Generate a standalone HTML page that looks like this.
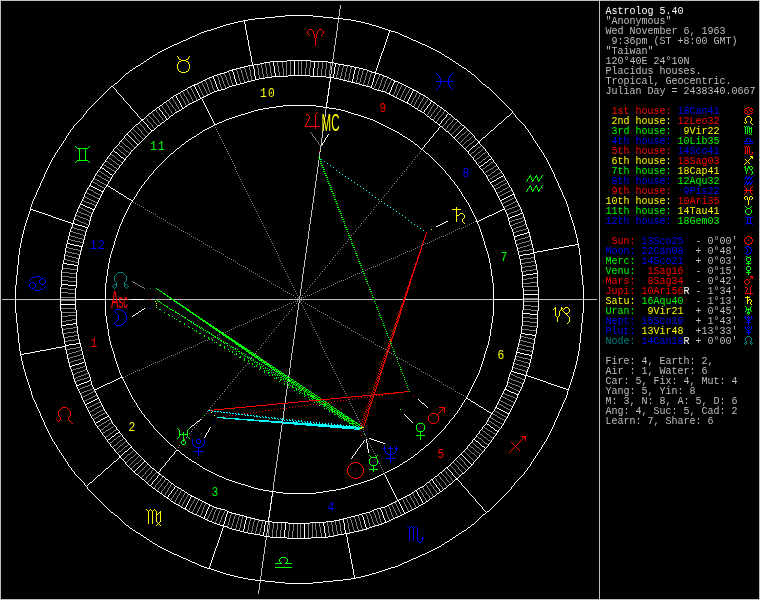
<!DOCTYPE html><html><head><meta charset="utf-8"><title>Astrolog 5.40</title><style>
html,body{margin:0;padding:0;background:#000;}
#w{position:relative;width:760px;height:600px;background:#000;overflow:hidden;font-family:"Liberation Mono",monospace;}
.l{position:absolute;left:605.5px;height:10px;font-size:10px;line-height:10px;white-space:pre;}
.hn{font-family:"Liberation Mono",monospace;font-size:13.3px;text-anchor:middle;letter-spacing:1.43px;}
.ob{font-family:"Liberation Sans",sans-serif;text-anchor:middle;}
</style></head><body><div id="w">
<div style="position:absolute;left:0;top:0;width:760px;height:600px;will-change:transform">
<svg width="760" height="600" viewBox="0 0 760 600" shape-rendering="crispEdges" style="position:absolute;left:0;top:0">
<g transform="translate(0,.5)" fill="none" stroke-width="1">
<path stroke="#bfbfbf" d="M0 0h760M0 1h1M599 1h1M759 1h1M0 2h1M599 2h1M759 2h1M0 3h1M599 3h1M759 3h1M0 4h1M599 4h1M759 4h1M0 5h1M340 5h1M599 5h1M759 5h1M0 6h1M340 6h1M599 6h1M759 6h1M0 7h1M340 7h1M599 7h1M759 7h1M0 8h1M340 8h1M599 8h1M759 8h1M0 9h1M339 9h1M599 9h1M759 9h1M0 10h1M339 10h1M599 10h1M759 10h1M0 11h1M339 11h1M599 11h1M759 11h1M0 12h1M339 12h1M599 12h1M759 12h1M0 13h1M339 13h1M599 13h1M759 13h1M0 14h1M339 14h1M599 14h1M759 14h1M0 15h1M339 15h1M599 15h1M759 15h1M0 16h1M338 16h1M599 16h1M759 16h1M0 17h1M338 17h1M599 17h1M759 17h1M0 18h1M599 18h1M759 18h1M0 19h1M338 19h1M599 19h1M759 19h1M0 20h1M338 20h1M599 20h1M759 20h1M0 21h1M338 21h1M599 21h1M759 21h1M0 22h1M338 22h1M599 22h1M759 22h1M0 23h1M337 23h1M599 23h1M759 23h1M0 24h1M337 24h1M599 24h1M759 24h1M0 25h1M337 25h1M599 25h1M759 25h1M0 26h1M337 26h1M599 26h1M759 26h1M0 27h1M337 27h1M599 27h1M759 27h1M0 28h1M337 28h1M599 28h1M759 28h1M0 29h1M337 29h1M599 29h1M759 29h1M0 30h1M337 30h1M599 30h1M759 30h1M0 31h1M336 31h1M599 31h1M759 31h1M0 32h1M336 32h1M599 32h1M759 32h1M0 33h1M336 33h1M599 33h1M759 33h1M0 34h1M336 34h1M599 34h1M759 34h1M0 35h1M336 35h1M599 35h1M759 35h1M0 36h1M336 36h1M599 36h1M759 36h1M0 37h1M336 37h1M599 37h1M759 37h1M0 38h1M335 38h1M599 38h1M759 38h1M0 39h1M335 39h1M599 39h1M759 39h1M0 40h1M335 40h1M599 40h1M759 40h1M0 41h1M335 41h1M599 41h1M759 41h1M0 42h1M335 42h1M599 42h1M759 42h1M0 43h1M335 43h1M599 43h1M759 43h1M0 44h1M335 44h1M599 44h1M759 44h1M0 45h1M334 45h1M599 45h1M759 45h1M0 46h1M334 46h1M599 46h1M759 46h1M0 47h1M334 47h1M599 47h1M759 47h1M0 48h1M334 48h1M599 48h1M759 48h1M0 49h1M334 49h1M599 49h1M759 49h1M0 50h1M334 50h1M599 50h1M759 50h1M0 51h1M334 51h1M599 51h1M759 51h1M0 52h1M333 52h1M599 52h1M759 52h1M0 53h1M333 53h1M599 53h1M759 53h1M0 54h1M333 54h1M599 54h1M759 54h1M0 55h1M333 55h1M599 55h1M759 55h1M0 56h1M333 56h1M599 56h1M759 56h1M0 57h1M333 57h1M599 57h1M759 57h1M0 58h1M333 58h1M599 58h1M759 58h1M0 59h1M332 59h1M599 59h1M759 59h1M0 60h1M332 60h1M599 60h1M759 60h1M0 61h1M332 61h1M599 61h1M759 61h1M0 62h1M599 62h1M759 62h1M0 63h1M332 63h1M599 63h1M759 63h1M0 64h1M332 64h1M599 64h1M759 64h1M0 65h1M332 65h1M599 65h1M759 65h1M0 66h1M331 66h1M599 66h1M759 66h1M0 67h1M331 67h1M599 67h1M759 67h1M0 68h1M331 68h1M599 68h1M759 68h1M0 69h1M331 69h1M599 69h1M759 69h1M0 70h1M331 70h1M599 70h1M759 70h1M0 71h1M331 71h1M599 71h1M759 71h1M0 72h1M331 72h1M599 72h1M759 72h1M0 73h1M331 73h1M599 73h1M759 73h1M0 74h1M330 74h1M599 74h1M759 74h1M0 75h1M330 75h1M599 75h1M759 75h1M0 76h1M330 76h1M599 76h1M759 76h1M0 77h1M599 77h1M759 77h1M0 78h1M599 78h1M759 78h1M0 79h1M599 79h1M759 79h1M0 80h1M599 80h1M759 80h1M0 81h1M329 81h1M599 81h1M759 81h1M0 82h1M599 82h1M759 82h1M0 83h1M599 83h1M759 83h1M0 84h1M599 84h1M759 84h1M0 85h1M599 85h1M759 85h1M0 86h1M599 86h1M759 86h1M0 87h1M599 87h1M759 87h1M0 88h1M328 88h1M599 88h1M759 88h1M0 89h1M599 89h1M759 89h1M0 90h1M599 90h1M759 90h1M0 91h1M599 91h1M759 91h1M0 92h1M599 92h1M759 92h1M0 93h1M599 93h1M759 93h1M0 94h1M599 94h1M759 94h1M0 95h1M327 95h1M599 95h1M759 95h1M0 96h1M599 96h1M759 96h1M0 97h1M599 97h1M759 97h1M0 98h1M599 98h1M759 98h1M0 99h1M599 99h1M759 99h1M0 100h1M599 100h1M759 100h1M0 101h1M599 101h1M759 101h1M0 102h1M326 102h1M599 102h1M759 102h1M0 103h1M599 103h1M759 103h1M0 104h1M599 104h1M759 104h1M0 105h1M599 105h1M759 105h1M0 106h1M599 106h1M759 106h1M0 107h1M599 107h1M759 107h1M0 108h1M326 108h1M599 108h1M759 108h1M0 109h1M325 109h1M599 109h1M759 109h1M0 110h1M325 110h1M599 110h1M759 110h1M0 111h1M325 111h1M599 111h1M759 111h1M0 112h1M325 112h1M599 112h1M759 112h1M0 113h1M325 113h1M599 113h1M759 113h1M0 114h1M325 114h1M599 114h1M759 114h1M0 115h1M325 115h1M599 115h1M759 115h1M0 116h1M325 116h1M599 116h1M759 116h1M0 117h1M324 117h1M599 117h1M759 117h1M0 118h1M324 118h1M599 118h1M759 118h1M0 119h1M324 119h1M599 119h1M759 119h1M0 120h1M324 120h1M599 120h1M759 120h1M0 121h1M324 121h1M599 121h1M759 121h1M0 122h1M324 122h1M599 122h1M759 122h1M0 123h1M324 123h1M599 123h1M759 123h1M0 124h1M323 124h1M599 124h1M759 124h1M0 125h1M323 125h1M599 125h1M759 125h1M0 126h1M323 126h1M599 126h1M759 126h1M0 127h1M323 127h1M599 127h1M759 127h1M0 128h1M323 128h1M599 128h1M759 128h1M0 129h1M323 129h1M599 129h1M759 129h1M0 130h1M323 130h1M599 130h1M759 130h1M0 131h1M322 131h1M599 131h1M759 131h1M0 132h1M322 132h1M599 132h1M759 132h1M0 133h1M322 133h1M599 133h1M759 133h1M0 134h1M322 134h1M599 134h1M759 134h1M0 135h1M322 135h1M599 135h1M759 135h1M0 136h1M322 136h1M599 136h1M759 136h1M0 137h1M322 137h1M599 137h1M759 137h1M0 138h1M321 138h1M599 138h1M759 138h1M0 139h1M321 139h1M599 139h1M759 139h1M0 140h1M321 140h1M599 140h1M759 140h1M0 141h1M321 141h1M599 141h1M759 141h1M0 142h1M321 142h1M599 142h1M759 142h1M0 143h1M321 143h1M599 143h1M759 143h1M0 144h1M321 144h1M599 144h1M759 144h1M0 145h1M599 145h1M759 145h1M0 146h1M320 146h1M599 146h1M759 146h1M0 147h1M320 147h1M599 147h1M759 147h1M0 148h1M320 148h1M599 148h1M759 148h1M0 149h1M320 149h1M599 149h1M759 149h1M0 150h1M320 150h1M599 150h1M759 150h1M0 151h1M599 151h1M759 151h1M0 152h1M319 152h1M599 152h1M759 152h1M0 153h1M319 153h1M599 153h1M759 153h1M0 154h1M319 154h1M599 154h1M759 154h1M0 155h1M319 155h1M599 155h1M759 155h1M0 156h1M319 156h1M599 156h1M759 156h1M0 157h1M599 157h1M759 157h1M0 158h1M319 158h1M599 158h1M759 158h1M0 159h1M599 159h1M759 159h1M0 160h1M318 160h1M599 160h1M759 160h1M0 161h1M318 161h1M599 161h1M759 161h1M0 162h1M318 162h1M599 162h1M759 162h1M0 163h1M318 163h1M599 163h1M759 163h1M0 164h1M318 164h1M599 164h1M759 164h1M0 165h1M318 165h1M599 165h1M759 165h1M0 166h1M318 166h1M599 166h1M759 166h1M0 167h1M317 167h1M599 167h1M759 167h1M0 168h1M317 168h1M599 168h1M759 168h1M0 169h1M317 169h1M599 169h1M759 169h1M0 170h1M317 170h1M599 170h1M759 170h1M0 171h1M317 171h1M599 171h1M759 171h1M0 172h1M317 172h1M599 172h1M759 172h1M0 173h1M317 173h1M599 173h1M759 173h1M0 174h1M316 174h1M599 174h1M759 174h1M0 175h1M316 175h1M599 175h1M759 175h1M0 176h1M316 176h1M599 176h1M759 176h1M0 177h1M316 177h1M599 177h1M759 177h1M0 178h1M316 178h1M599 178h1M759 178h1M0 179h1M316 179h1M599 179h1M759 179h1M0 180h1M316 180h1M599 180h1M759 180h1M0 181h1M315 181h1M599 181h1M759 181h1M0 182h1M315 182h1M599 182h1M759 182h1M0 183h1M315 183h1M599 183h1M759 183h1M0 184h1M315 184h1M599 184h1M759 184h1M0 185h1M315 185h1M599 185h1M759 185h1M0 186h1M315 186h1M599 186h1M759 186h1M0 187h1M315 187h1M599 187h1M759 187h1M0 188h1M314 188h1M599 188h1M759 188h1M0 189h1M314 189h1M599 189h1M759 189h1M0 190h1M314 190h1M599 190h1M759 190h1M0 191h1M314 191h1M599 191h1M759 191h1M0 192h1M314 192h1M599 192h1M759 192h1M0 193h1M314 193h1M599 193h1M759 193h1M0 194h1M314 194h1M599 194h1M759 194h1M0 195h1M314 195h1M599 195h1M759 195h1M0 196h1M313 196h1M599 196h1M759 196h1M0 197h1M313 197h1M599 197h1M759 197h1M0 198h1M313 198h1M599 198h1M759 198h1M0 199h1M313 199h1M599 199h1M759 199h1M0 200h1M313 200h1M599 200h1M759 200h1M0 201h1M313 201h1M599 201h1M759 201h1M0 202h1M313 202h1M599 202h1M759 202h1M0 203h1M312 203h1M599 203h1M759 203h1M0 204h1M312 204h1M599 204h1M759 204h1M0 205h1M312 205h1M599 205h1M759 205h1M0 206h1M312 206h1M599 206h1M759 206h1M0 207h1M312 207h1M599 207h1M759 207h1M0 208h1M312 208h1M599 208h1M759 208h1M0 209h1M312 209h1M599 209h1M759 209h1M0 210h1M311 210h1M599 210h1M759 210h1M0 211h1M311 211h1M599 211h1M759 211h1M0 212h1M311 212h1M599 212h1M759 212h1M0 213h1M311 213h1M599 213h1M759 213h1M0 214h1M311 214h1M599 214h1M759 214h1M0 215h1M311 215h1M599 215h1M759 215h1M0 216h1M311 216h1M599 216h1M759 216h1M0 217h1M310 217h1M599 217h1M759 217h1M0 218h1M310 218h1M599 218h1M759 218h1M0 219h1M310 219h1M599 219h1M759 219h1M0 220h1M310 220h1M599 220h1M759 220h1M0 221h1M310 221h1M599 221h1M759 221h1M0 222h1M310 222h1M599 222h1M759 222h1M0 223h1M310 223h1M599 223h1M759 223h1M0 224h1M309 224h1M599 224h1M759 224h1M0 225h1M309 225h1M599 225h1M759 225h1M0 226h1M309 226h1M599 226h1M759 226h1M0 227h1M309 227h1M599 227h1M759 227h1M0 228h1M309 228h1M599 228h1M759 228h1M0 229h1M309 229h1M599 229h1M759 229h1M0 230h1M309 230h1M599 230h1M759 230h1M0 231h1M308 231h1M599 231h1M759 231h1M0 232h1M308 232h1M599 232h1M759 232h1M0 233h1M308 233h1M599 233h1M759 233h1M0 234h1M308 234h1M599 234h1M759 234h1M0 235h1M308 235h1M599 235h1M759 235h1M0 236h1M308 236h1M599 236h1M759 236h1M0 237h1M308 237h1M599 237h1M759 237h1M0 238h1M308 238h1M599 238h1M759 238h1M0 239h1M307 239h1M599 239h1M759 239h1M0 240h1M307 240h1M599 240h1M759 240h1M0 241h1M307 241h1M599 241h1M759 241h1M0 242h1M307 242h1M599 242h1M759 242h1M0 243h1M307 243h1M599 243h1M759 243h1M0 244h1M307 244h1M599 244h1M759 244h1M0 245h1M307 245h1M599 245h1M759 245h1M0 246h1M306 246h1M599 246h1M759 246h1M0 247h1M306 247h1M599 247h1M759 247h1M0 248h1M306 248h1M599 248h1M759 248h1M0 249h1M306 249h1M599 249h1M759 249h1M0 250h1M306 250h1M599 250h1M759 250h1M0 251h1M306 251h1M599 251h1M759 251h1M0 252h1M306 252h1M599 252h1M759 252h1M0 253h1M305 253h1M599 253h1M759 253h1M0 254h1M305 254h1M599 254h1M759 254h1M0 255h1M305 255h1M599 255h1M759 255h1M0 256h1M305 256h1M599 256h1M759 256h1M0 257h1M305 257h1M599 257h1M759 257h1M0 258h1M305 258h1M599 258h1M759 258h1M0 259h1M305 259h1M599 259h1M759 259h1M0 260h1M304 260h1M599 260h1M759 260h1M0 261h1M304 261h1M599 261h1M759 261h1M0 262h1M304 262h1M599 262h1M759 262h1M0 263h1M304 263h1M599 263h1M759 263h1M0 264h1M304 264h1M599 264h1M759 264h1M0 265h1M304 265h1M599 265h1M759 265h1M0 266h1M304 266h1M599 266h1M759 266h1M0 267h1M303 267h1M599 267h1M759 267h1M0 268h1M303 268h1M599 268h1M759 268h1M0 269h1M303 269h1M599 269h1M759 269h1M0 270h1M303 270h1M599 270h1M759 270h1M0 271h1M303 271h1M599 271h1M759 271h1M0 272h1M303 272h1M599 272h1M759 272h1M0 273h1M303 273h1M599 273h1M759 273h1M0 274h1M302 274h1M599 274h1M759 274h1M0 275h1M302 275h1M599 275h1M759 275h1M0 276h1M302 276h1M599 276h1M759 276h1M0 277h1M302 277h1M599 277h1M759 277h1M0 278h1M302 278h1M599 278h1M759 278h1M0 279h1M302 279h1M599 279h1M759 279h1M0 280h1M302 280h1M599 280h1M759 280h1M0 281h1M302 281h1M599 281h1M759 281h1M0 282h1M301 282h1M599 282h1M759 282h1M0 283h1M301 283h1M599 283h1M759 283h1M0 284h1M301 284h1M599 284h1M759 284h1M0 285h1M301 285h1M599 285h1M759 285h1M0 286h1M301 286h1M599 286h1M759 286h1M0 287h1M301 287h1M599 287h1M759 287h1M0 288h1M301 288h1M599 288h1M759 288h1M0 289h1M300 289h1M599 289h1M759 289h1M0 290h1M300 290h1M599 290h1M759 290h1M0 291h1M300 291h1M599 291h1M759 291h1M0 292h1M300 292h1M599 292h1M759 292h1M0 293h1M300 293h1M599 293h1M759 293h1M0 294h1M300 294h1M599 294h1M759 294h1M0 295h1M300 295h1M599 295h1M759 295h1M0 296h1M299 296h1M599 296h1M759 296h1M0 297h1M299 297h1M599 297h1M759 297h1M0 298h1M299 298h1M599 298h1M759 298h1M0 299h1M2 299h13M16 299h44M61 299h14M106 299h25M144 299h5M150 299h5M156 299h16M174 299h125M300 299h73M375 299h28M405 299h88M524 299h14M539 299h44M584 299h13M599 299h1M759 299h1M0 300h1M299 300h1M599 300h1M759 300h1M0 301h1M299 301h1M599 301h1M759 301h1M0 302h1M299 302h1M599 302h1M759 302h1M0 303h1M298 303h1M599 303h1M759 303h1M0 304h1M298 304h1M599 304h1M759 304h1M0 305h1M298 305h1M599 305h1M759 305h1M0 306h1M298 306h1M599 306h1M759 306h1M0 307h1M298 307h1M599 307h1M759 307h1M0 308h1M298 308h1M599 308h1M759 308h1M0 309h1M298 309h1M599 309h1M759 309h1M0 310h1M297 310h1M599 310h1M759 310h1M0 311h1M297 311h1M599 311h1M759 311h1M0 312h1M297 312h1M599 312h1M759 312h1M0 313h1M297 313h1M599 313h1M759 313h1M0 314h1M297 314h1M599 314h1M759 314h1M0 315h1M297 315h1M599 315h1M759 315h1M0 316h1M297 316h1M599 316h1M759 316h1M0 317h1M296 317h1M599 317h1M759 317h1M0 318h1M296 318h1M599 318h1M759 318h1M0 319h1M296 319h1M599 319h1M759 319h1M0 320h1M296 320h1M599 320h1M759 320h1M0 321h1M296 321h1M599 321h1M759 321h1M0 322h1M296 322h1M599 322h1M759 322h1M0 323h1M296 323h1M599 323h1M759 323h1M0 324h1M296 324h1M599 324h1M759 324h1M0 325h1M295 325h1M599 325h1M759 325h1M0 326h1M295 326h1M599 326h1M759 326h1M0 327h1M295 327h1M599 327h1M759 327h1M0 328h1M295 328h1M599 328h1M759 328h1M0 329h1M295 329h1M599 329h1M759 329h1M0 330h1M295 330h1M599 330h1M759 330h1M0 331h1M295 331h1M599 331h1M759 331h1M0 332h1M294 332h1M599 332h1M759 332h1M0 333h1M294 333h1M599 333h1M759 333h1M0 334h1M294 334h1M599 334h1M759 334h1M0 335h1M294 335h1M599 335h1M759 335h1M0 336h1M294 336h1M599 336h1M759 336h1M0 337h1M294 337h1M599 337h1M759 337h1M0 338h1M294 338h1M599 338h1M759 338h1M0 339h1M293 339h1M599 339h1M759 339h1M0 340h1M293 340h1M599 340h1M759 340h1M0 341h1M293 341h1M599 341h1M759 341h1M0 342h1M293 342h1M599 342h1M759 342h1M0 343h1M293 343h1M599 343h1M759 343h1M0 344h1M293 344h1M599 344h1M759 344h1M0 345h1M293 345h1M599 345h1M759 345h1M0 346h1M292 346h1M599 346h1M759 346h1M0 347h1M292 347h1M599 347h1M759 347h1M0 348h1M292 348h1M599 348h1M759 348h1M0 349h1M292 349h1M599 349h1M759 349h1M0 350h1M292 350h1M599 350h1M759 350h1M0 351h1M292 351h1M599 351h1M759 351h1M0 352h1M292 352h1M599 352h1M759 352h1M0 353h1M291 353h1M599 353h1M759 353h1M0 354h1M291 354h1M599 354h1M759 354h1M0 355h1M291 355h1M599 355h1M759 355h1M0 356h1M291 356h1M599 356h1M759 356h1M0 357h1M291 357h1M599 357h1M759 357h1M0 358h1M291 358h1M599 358h1M759 358h1M0 359h1M291 359h1M599 359h1M759 359h1M0 360h1M290 360h1M599 360h1M759 360h1M0 361h1M290 361h1M599 361h1M759 361h1M0 362h1M290 362h1M599 362h1M759 362h1M0 363h1M290 363h1M599 363h1M759 363h1M0 364h1M290 364h1M599 364h1M759 364h1M0 365h1M290 365h1M599 365h1M759 365h1M0 366h1M290 366h1M599 366h1M759 366h1M0 367h1M290 367h1M599 367h1M759 367h1M0 368h1M289 368h1M599 368h1M759 368h1M0 369h1M289 369h1M599 369h1M759 369h1M0 370h1M289 370h1M599 370h1M759 370h1M0 371h1M289 371h1M599 371h1M759 371h1M0 372h1M289 372h1M599 372h1M759 372h1M0 373h1M289 373h1M599 373h1M759 373h1M0 374h1M289 374h1M599 374h1M759 374h1M0 375h1M288 375h1M599 375h1M759 375h1M0 376h1M288 376h1M599 376h1M759 376h1M0 377h1M599 377h1M759 377h1M0 378h1M599 378h1M759 378h1M0 379h1M288 379h1M599 379h1M759 379h1M0 380h1M599 380h1M759 380h1M0 381h1M288 381h1M599 381h1M759 381h1M0 382h1M287 382h1M599 382h1M759 382h1M0 383h1M599 383h1M759 383h1M0 384h1M287 384h1M599 384h1M759 384h1M0 385h1M287 385h1M599 385h1M759 385h1M0 386h1M287 386h1M599 386h1M759 386h1M0 387h1M287 387h1M599 387h1M759 387h1M0 388h1M287 388h1M599 388h1M759 388h1M0 389h1M286 389h1M599 389h1M759 389h1M0 390h1M286 390h1M599 390h1M759 390h1M0 391h1M286 391h1M599 391h1M759 391h1M0 392h1M286 392h1M599 392h1M759 392h1M0 393h1M286 393h1M599 393h1M759 393h1M0 394h1M286 394h1M599 394h1M759 394h1M0 395h1M286 395h1M599 395h1M759 395h1M0 396h1M285 396h1M599 396h1M759 396h1M0 397h1M285 397h1M599 397h1M759 397h1M0 398h1M285 398h1M599 398h1M759 398h1M0 399h1M285 399h1M599 399h1M759 399h1M0 400h1M285 400h1M599 400h1M759 400h1M0 401h1M285 401h1M599 401h1M759 401h1M0 402h1M285 402h1M599 402h1M759 402h1M0 403h1M599 403h1M759 403h1M0 404h1M284 404h1M599 404h1M759 404h1M0 405h1M284 405h1M599 405h1M759 405h1M0 406h1M284 406h1M599 406h1M759 406h1M0 407h1M284 407h1M599 407h1M759 407h1M0 408h1M284 408h1M599 408h1M759 408h1M0 409h1M284 409h1M599 409h1M759 409h1M0 410h1M284 410h1M599 410h1M759 410h1M0 411h1M283 411h1M599 411h1M759 411h1M0 412h1M283 412h1M599 412h1M759 412h1M0 413h1M283 413h1M599 413h1M759 413h1M0 414h1M283 414h1M599 414h1M759 414h1M0 415h1M283 415h1M599 415h1M759 415h1M0 416h1M283 416h1M599 416h1M759 416h1M0 417h1M283 417h1M599 417h1M759 417h1M0 418h1M282 418h1M599 418h1M759 418h1M0 419h1M282 419h1M599 419h1M759 419h1M0 420h1M282 420h1M599 420h1M759 420h1M0 421h1M599 421h1M759 421h1M0 422h1M599 422h1M759 422h1M0 423h1M282 423h1M599 423h1M759 423h1M0 424h1M282 424h1M599 424h1M759 424h1M0 425h1M281 425h1M599 425h1M759 425h1M0 426h1M281 426h1M599 426h1M759 426h1M0 427h1M281 427h1M599 427h1M759 427h1M0 428h1M281 428h1M599 428h1M759 428h1M0 429h1M281 429h1M599 429h1M759 429h1M0 430h1M281 430h1M599 430h1M759 430h1M0 431h1M281 431h1M599 431h1M759 431h1M0 432h1M280 432h1M599 432h1M759 432h1M0 433h1M280 433h1M599 433h1M759 433h1M0 434h1M280 434h1M599 434h1M759 434h1M0 435h1M280 435h1M599 435h1M759 435h1M0 436h1M280 436h1M599 436h1M759 436h1M0 437h1M280 437h1M599 437h1M759 437h1M0 438h1M280 438h1M599 438h1M759 438h1M0 439h1M279 439h1M599 439h1M759 439h1M0 440h1M279 440h1M599 440h1M759 440h1M0 441h1M279 441h1M599 441h1M759 441h1M0 442h1M279 442h1M599 442h1M759 442h1M0 443h1M279 443h1M599 443h1M759 443h1M0 444h1M279 444h1M599 444h1M759 444h1M0 445h1M279 445h1M599 445h1M759 445h1M0 446h1M278 446h1M599 446h1M759 446h1M0 447h1M278 447h1M599 447h1M759 447h1M0 448h1M278 448h1M599 448h1M759 448h1M0 449h1M278 449h1M599 449h1M759 449h1M0 450h1M278 450h1M599 450h1M759 450h1M0 451h1M278 451h1M599 451h1M759 451h1M0 452h1M278 452h1M599 452h1M759 452h1M0 453h1M278 453h1M599 453h1M759 453h1M0 454h1M277 454h1M599 454h1M759 454h1M0 455h1M277 455h1M599 455h1M759 455h1M0 456h1M277 456h1M599 456h1M759 456h1M0 457h1M277 457h1M599 457h1M759 457h1M0 458h1M277 458h1M599 458h1M759 458h1M0 459h1M277 459h1M599 459h1M759 459h1M0 460h1M277 460h1M599 460h1M759 460h1M0 461h1M276 461h1M599 461h1M759 461h1M0 462h1M276 462h1M599 462h1M759 462h1M0 463h1M276 463h1M599 463h1M759 463h1M0 464h1M276 464h1M599 464h1M759 464h1M0 465h1M276 465h1M599 465h1M759 465h1M0 466h1M276 466h1M599 466h1M759 466h1M0 467h1M276 467h1M599 467h1M759 467h1M0 468h1M275 468h1M599 468h1M759 468h1M0 469h1M275 469h1M599 469h1M759 469h1M0 470h1M275 470h1M599 470h1M759 470h1M0 471h1M275 471h1M599 471h1M759 471h1M0 472h1M275 472h1M599 472h1M759 472h1M0 473h1M275 473h1M599 473h1M759 473h1M0 474h1M275 474h1M599 474h1M759 474h1M0 475h1M274 475h1M599 475h1M759 475h1M0 476h1M274 476h1M599 476h1M759 476h1M0 477h1M274 477h1M599 477h1M759 477h1M0 478h1M274 478h1M599 478h1M759 478h1M0 479h1M274 479h1M599 479h1M759 479h1M0 480h1M274 480h1M599 480h1M759 480h1M0 481h1M274 481h1M599 481h1M759 481h1M0 482h1M273 482h1M599 482h1M759 482h1M0 483h1M273 483h1M599 483h1M759 483h1M0 484h1M273 484h1M599 484h1M759 484h1M0 485h1M273 485h1M599 485h1M759 485h1M0 486h1M273 486h1M599 486h1M759 486h1M0 487h1M273 487h1M599 487h1M759 487h1M0 488h1M273 488h1M599 488h1M759 488h1M0 489h1M273 489h1M599 489h1M759 489h1M0 490h1M272 490h1M599 490h1M759 490h1M0 491h1M599 491h1M759 491h1M0 492h1M599 492h1M759 492h1M0 493h1M599 493h1M759 493h1M0 494h1M599 494h1M759 494h1M0 495h1M599 495h1M759 495h1M0 496h1M272 496h1M599 496h1M759 496h1M0 497h1M599 497h1M759 497h1M0 498h1M599 498h1M759 498h1M0 499h1M599 499h1M759 499h1M0 500h1M599 500h1M759 500h1M0 501h1M599 501h1M759 501h1M0 502h1M599 502h1M759 502h1M0 503h1M271 503h1M599 503h1M759 503h1M0 504h1M599 504h1M759 504h1M0 505h1M599 505h1M759 505h1M0 506h1M599 506h1M759 506h1M0 507h1M599 507h1M759 507h1M0 508h1M599 508h1M759 508h1M0 509h1M599 509h1M759 509h1M0 510h1M270 510h1M599 510h1M759 510h1M0 511h1M599 511h1M759 511h1M0 512h1M599 512h1M759 512h1M0 513h1M599 513h1M759 513h1M0 514h1M599 514h1M759 514h1M0 515h1M599 515h1M759 515h1M0 516h1M599 516h1M759 516h1M0 517h1M269 517h1M599 517h1M759 517h1M0 518h1M599 518h1M759 518h1M0 519h1M599 519h1M759 519h1M0 520h1M599 520h1M759 520h1M0 521h1M599 521h1M759 521h1M0 522h1M268 522h1M599 522h1M759 522h1M0 523h1M268 523h1M599 523h1M759 523h1M0 524h1M268 524h1M599 524h1M759 524h1M0 525h1M267 525h1M599 525h1M759 525h1M0 526h1M267 526h1M599 526h1M759 526h1M0 527h1M267 527h1M599 527h1M759 527h1M0 528h1M267 528h1M599 528h1M759 528h1M0 529h1M267 529h1M599 529h1M759 529h1M0 530h1M267 530h1M599 530h1M759 530h1M0 531h1M267 531h1M599 531h1M759 531h1M0 532h1M267 532h1M599 532h1M759 532h1M0 533h1M266 533h1M599 533h1M759 533h1M0 534h1M266 534h1M599 534h1M759 534h1M0 535h1M266 535h1M599 535h1M759 535h1M0 536h1M599 536h1M759 536h1M0 537h1M266 537h1M599 537h1M759 537h1M0 538h1M266 538h1M599 538h1M759 538h1M0 539h1M266 539h1M599 539h1M759 539h1M0 540h1M265 540h1M599 540h1M759 540h1M0 541h1M265 541h1M599 541h1M759 541h1M0 542h1M265 542h1M599 542h1M759 542h1M0 543h1M265 543h1M599 543h1M759 543h1M0 544h1M265 544h1M599 544h1M759 544h1M0 545h1M265 545h1M599 545h1M759 545h1M0 546h1M265 546h1M599 546h1M759 546h1M0 547h1M264 547h1M599 547h1M759 547h1M0 548h1M264 548h1M599 548h1M759 548h1M0 549h1M264 549h1M599 549h1M759 549h1M0 550h1M264 550h1M599 550h1M759 550h1M0 551h1M264 551h1M599 551h1M759 551h1M0 552h1M264 552h1M599 552h1M759 552h1M0 553h1M264 553h1M599 553h1M759 553h1M0 554h1M263 554h1M599 554h1M759 554h1M0 555h1M263 555h1M599 555h1M759 555h1M0 556h1M263 556h1M599 556h1M759 556h1M0 557h1M263 557h1M599 557h1M759 557h1M0 558h1M263 558h1M599 558h1M759 558h1M0 559h1M263 559h1M599 559h1M759 559h1M0 560h1M263 560h1M599 560h1M759 560h1M0 561h1M262 561h1M599 561h1M759 561h1M0 562h1M262 562h1M599 562h1M759 562h1M0 563h1M262 563h1M599 563h1M759 563h1M0 564h1M262 564h1M599 564h1M759 564h1M0 565h1M262 565h1M599 565h1M759 565h1M0 566h1M262 566h1M599 566h1M759 566h1M0 567h1M262 567h1M599 567h1M759 567h1M0 568h1M261 568h1M599 568h1M759 568h1M0 569h1M261 569h1M599 569h1M759 569h1M0 570h1M261 570h1M599 570h1M759 570h1M0 571h1M261 571h1M599 571h1M759 571h1M0 572h1M261 572h1M599 572h1M759 572h1M0 573h1M261 573h1M599 573h1M759 573h1M0 574h1M261 574h1M599 574h1M759 574h1M0 575h1M261 575h1M599 575h1M759 575h1M0 576h1M260 576h1M599 576h1M759 576h1M0 577h1M260 577h1M599 577h1M759 577h1M0 578h1M260 578h1M599 578h1M759 578h1M0 579h1M260 579h1M599 579h1M759 579h1M0 580h1M599 580h1M759 580h1M0 581h1M260 581h1M599 581h1M759 581h1M0 582h1M260 582h1M599 582h1M759 582h1M0 583h1M259 583h1M599 583h1M759 583h1M0 584h1M259 584h1M599 584h1M759 584h1M0 585h1M259 585h1M599 585h1M759 585h1M0 586h1M259 586h1M599 586h1M759 586h1M0 587h1M259 587h1M599 587h1M759 587h1M0 588h1M259 588h1M599 588h1M759 588h1M0 589h1M259 589h1M599 589h1M759 589h1M0 590h1M258 590h1M599 590h1M759 590h1M0 591h1M258 591h1M599 591h1M759 591h1M0 592h1M258 592h1M599 592h1M759 592h1M0 593h1M258 593h1M599 593h1M759 593h1M0 594h1M599 594h1M759 594h1M0 595h1M599 595h1M759 595h1M0 596h1M599 596h1M759 596h1M0 597h1M599 597h1M759 597h1M0 598h1M599 598h1M759 598h1M0 599h760"/>
<path stroke="#ffffff" d="M285 15h28M275 16h10M313 16h10M265 17h10M323 17h10M255 18h10M333 18h10M248 19h7M343 19h8M243 20h5M351 20h5M238 21h5M244 21h1M356 21h5M234 22h4M244 22h1M361 22h4M230 23h4M244 23h1M365 23h4M226 24h4M245 24h1M369 24h3M223 25h3M245 25h1M372 25h4M220 26h3M245 26h1M376 26h3M217 27h3M245 27h1M379 27h3M214 28h3M245 28h1M382 28h3M211 29h3M245 29h1M385 29h3M207 30h4M246 30h1M388 30h3M204 31h3M246 31h1M389 31h1M391 31h4M201 32h3M246 32h1M389 32h1M395 32h3M199 33h2M246 33h1M388 33h1M398 33h2M197 34h2M246 34h1M388 34h1M400 34h2M195 35h2M247 35h1M388 35h1M402 35h2M192 36h3M247 36h1M387 36h1M404 36h3M190 37h2M247 37h1M387 37h1M407 37h2M188 38h2M247 38h1M387 38h1M409 38h2M186 39h2M247 39h1M386 39h1M411 39h2M183 40h3M248 40h1M386 40h1M413 40h3M181 41h2M248 41h1M386 41h1M416 41h2M179 42h2M248 42h1M385 42h1M418 42h2M177 43h2M248 43h1M385 43h1M420 43h2M174 44h3M248 44h1M385 44h1M422 44h3M172 45h2M248 45h1M384 45h1M425 45h2M170 46h2M249 46h1M384 46h1M427 46h2M168 47h2M249 47h1M384 47h1M429 47h2M166 48h2M249 48h1M383 48h1M431 48h2M164 49h2M249 49h1M383 49h1M433 49h2M162 50h2M249 50h1M383 50h1M435 50h2M160 51h2M250 51h1M382 51h1M437 51h2M158 52h2M250 52h1M382 52h1M439 52h2M157 53h1M250 53h1M381 53h1M441 53h1M155 54h2M250 54h1M381 54h1M442 54h2M153 55h2M250 55h1M381 55h1M444 55h1M152 56h1M251 56h1M380 56h1M445 56h2M150 57h2M251 57h1M380 57h1M447 57h2M149 58h1M251 58h1M380 58h1M449 58h1M147 59h2M251 59h1M379 59h1M450 59h2M146 60h1M251 60h1M287 60h24M379 60h1M452 60h1M144 61h2M251 61h1M270 61h17M294 61h1M311 61h17M379 61h1M453 61h2M143 62h1M252 62h1M264 62h6M273 62h1M294 62h1M314 62h1M328 62h6M378 62h1M455 62h1M141 63h2M252 63h1M260 63h4M273 63h1M294 63h1M314 63h1M334 63h4M378 63h1M456 63h2M140 64h1M252 64h1M254 64h6M273 64h1M294 64h1M314 64h1M335 64h1M338 64h6M378 64h1M458 64h1M138 65h2M248 65h6M273 65h1M294 65h1M314 65h1M335 65h1M344 65h6M377 65h1M459 65h2M136 66h2M244 66h4M253 66h1M274 66h1M294 66h1M314 66h1M335 66h1M350 66h4M377 66h1M461 66h1M135 67h1M240 67h4M253 67h1M274 67h1M294 67h1M314 67h1M334 67h1M354 67h5M377 67h1M462 67h2M133 68h2M236 68h4M253 68h1M274 68h1M294 68h1M313 68h1M334 68h1M355 68h1M359 68h4M376 68h1M464 68h2M132 69h1M232 69h4M254 69h1M274 69h1M294 69h1M313 69h1M334 69h1M355 69h1M363 69h4M376 69h1M466 69h1M130 70h2M229 70h4M254 70h1M274 70h1M294 70h1M313 70h1M334 70h1M354 70h1M367 70h2M376 70h1M467 70h1M129 71h1M227 71h2M232 71h1M254 71h1M274 71h1M294 71h1M313 71h1M334 71h1M354 71h1M369 71h3M375 71h1M468 71h2M128 72h1M224 72h3M233 72h1M254 72h1M274 72h1M294 72h1M313 72h1M334 72h1M354 72h1M372 72h4M470 72h1M126 73h2M220 73h4M233 73h1M254 73h1M275 73h1M294 73h1M313 73h1M334 73h1M354 73h1M375 73h4M471 73h1M125 74h1M217 74h3M233 74h1M254 74h1M275 74h1M294 74h1M313 74h1M333 74h1M353 74h1M375 74h1M379 74h3M472 74h2M124 75h1M214 75h3M234 75h1M254 75h1M275 75h1M288 75h22M313 75h1M333 75h1M353 75h1M374 75h1M382 75h2M474 75h1M123 76h1M212 76h2M234 76h1M255 76h1M272 76h16M310 76h16M333 76h1M353 76h1M374 76h1M384 76h3M475 76h1M122 77h1M209 77h3M213 77h1M234 77h1M255 77h1M265 77h7M326 77h8M353 77h1M374 77h1M387 77h2M476 77h1M121 78h1M207 78h2M213 78h1M234 78h1M255 78h1M259 78h6M330 78h1M334 78h5M353 78h1M373 78h1M389 78h2M477 78h1M120 79h1M205 79h2M214 79h1M235 79h1M255 79h4M330 79h1M339 79h4M352 79h1M373 79h1M391 79h2M478 79h1M119 80h1M203 80h2M214 80h1M235 80h1M251 80h4M330 80h1M343 80h4M352 80h1M373 80h1M393 80h2M479 80h1M118 81h1M201 81h2M215 81h1M235 81h1M247 81h4M330 81h1M347 81h4M352 81h1M373 81h1M394 81h4M480 81h1M117 82h1M199 82h2M215 82h1M236 82h1M244 82h3M329 82h1M351 82h4M372 82h1M394 82h1M398 82h2M481 82h1M115 83h2M197 83h2M215 83h1M236 83h1M240 83h4M329 83h1M355 83h4M372 83h1M393 83h1M400 83h2M482 83h1M114 84h1M194 84h3M216 84h1M236 84h4M329 84h1M359 84h3M372 84h1M393 84h1M402 84h2M483 84h2M113 85h1M192 85h3M216 85h1M232 85h4M329 85h1M362 85h4M371 85h1M392 85h1M404 85h2M485 85h1M111 86h2M190 86h2M194 86h1M216 86h1M229 86h3M329 86h1M366 86h4M371 86h1M392 86h1M406 86h2M486 86h1M110 87h1M113 87h1M188 87h2M195 87h1M217 87h1M227 87h2M329 87h1M370 87h2M391 87h1M408 87h2M487 87h2M109 88h1M114 88h1M187 88h1M195 88h1M217 88h1M225 88h2M329 88h1M372 88h2M391 88h1M410 88h2M489 88h1M108 89h1M115 89h1M185 89h2M196 89h1M218 89h1M221 89h4M328 89h1M374 89h3M391 89h1M412 89h2M490 89h1M107 90h1M116 90h1M183 90h2M196 90h1M217 90h4M328 90h1M377 90h4M390 90h1M413 90h3M491 90h1M106 91h1M116 91h1M181 91h2M197 91h1M214 91h3M328 91h1M381 91h4M390 91h1M412 91h1M416 91h2M492 91h1M105 92h1M117 92h1M180 92h1M197 92h1M212 92h2M328 92h1M385 92h2M389 92h1M412 92h1M418 92h1M493 92h1M104 93h1M118 93h1M178 93h2M198 93h1M210 93h2M328 93h1M387 93h3M411 93h1M419 93h2M494 93h1M103 94h1M119 94h1M176 94h2M198 94h1M208 94h2M328 94h1M389 94h2M411 94h1M421 94h2M495 94h1M102 95h1M120 95h1M174 95h2M199 95h1M206 95h2M328 95h1M391 95h2M410 95h1M423 95h2M496 95h1M101 96h1M121 96h1M173 96h1M176 96h1M199 96h1M204 96h2M327 96h1M393 96h2M410 96h1M425 96h1M497 96h1M100 97h1M122 97h1M171 97h2M176 97h1M200 97h1M202 97h2M327 97h1M395 97h2M409 97h1M426 97h2M498 97h1M99 98h1M123 98h1M170 98h1M177 98h1M200 98h2M327 98h1M397 98h2M409 98h1M428 98h1M499 98h1M98 99h1M123 99h1M169 99h1M177 99h1M198 99h2M202 99h1M327 99h1M399 99h2M408 99h1M429 99h1M500 99h1M97 100h1M124 100h1M167 100h2M178 100h1M196 100h2M202 100h1M327 100h1M401 100h2M408 100h1M430 100h2M501 100h1M96 101h1M125 101h1M166 101h1M179 101h1M194 101h2M203 101h1M327 101h1M403 101h2M407 101h1M431 101h2M502 101h1M95 102h1M126 102h1M164 102h2M179 102h1M192 102h2M203 102h1M327 102h1M405 102h3M430 102h1M433 102h2M503 102h1M94 103h1M127 103h1M163 103h1M180 103h1M190 103h2M204 103h1M326 103h1M407 103h2M430 103h1M435 103h1M504 103h1M93 104h1M128 104h1M162 104h1M180 104h1M188 104h2M204 104h1M326 104h1M409 104h2M429 104h1M436 104h1M505 104h1M92 105h1M129 105h1M160 105h2M181 105h1M187 105h1M205 105h1M283 105h33M326 105h1M411 105h1M428 105h1M437 105h2M506 105h1M91 106h1M130 106h1M159 106h1M181 106h1M185 106h2M205 106h1M276 106h7M316 106h7M326 106h1M412 106h2M427 106h1M439 106h1M507 106h1M90 107h1M130 107h1M157 107h2M182 107h1M184 107h1M206 107h1M269 107h7M323 107h6M414 107h1M427 107h1M440 107h2M508 107h1M89 108h1M131 108h1M156 108h1M159 108h1M182 108h2M206 108h1M263 108h6M329 108h7M415 108h2M426 108h1M442 108h1M509 108h1M88 109h1M132 109h1M155 109h1M159 109h1M181 109h1M207 109h1M258 109h5M336 109h5M417 109h1M425 109h1M443 109h1M510 109h1M87 110h1M133 110h1M153 110h2M160 110h1M179 110h2M207 110h1M254 110h4M341 110h4M418 110h2M424 110h1M444 110h2M511 110h1M86 111h1M134 111h1M152 111h1M161 111h1M177 111h2M208 111h1M251 111h3M345 111h3M420 111h2M424 111h1M446 111h1M512 111h1M86 112h1M135 112h1M151 112h1M162 112h1M175 112h2M208 112h1M248 112h3M348 112h3M422 112h2M447 112h1M512 112h1M85 113h1M136 113h1M149 113h2M162 113h1M174 113h1M209 113h1M245 113h3M351 113h3M424 113h1M448 113h1M511 113h1M513 113h1M84 114h1M137 114h1M148 114h1M163 114h1M173 114h1M209 114h1M241 114h4M354 114h4M425 114h1M447 114h1M449 114h2M510 114h1M514 114h1M83 115h1M137 115h1M147 115h1M164 115h1M171 115h2M210 115h1M238 115h3M358 115h3M426 115h1M446 115h1M451 115h1M509 115h1M515 115h1M83 116h1M138 116h1M146 116h1M165 116h1M170 116h1M210 116h1M235 116h3M361 116h3M427 116h2M446 116h1M452 116h1M507 116h2M515 116h1M82 117h1M139 117h1M145 117h1M165 117h1M169 117h1M211 117h1M232 117h3M364 117h3M429 117h1M445 117h1M453 117h1M506 117h1M516 117h1M81 118h1M140 118h1M144 118h1M166 118h1M168 118h1M211 118h1M229 118h3M367 118h3M430 118h1M444 118h1M454 118h1M505 118h1M517 118h1M80 119h1M141 119h3M166 119h2M212 119h1M226 119h3M370 119h3M431 119h2M443 119h1M455 119h2M504 119h1M518 119h1M79 120h1M141 120h2M165 120h1M212 120h1M224 120h2M373 120h2M433 120h1M442 120h1M457 120h1M503 120h1M519 120h1M78 121h1M140 121h1M143 121h1M164 121h1M213 121h1M222 121h2M375 121h2M434 121h1M441 121h1M458 121h1M502 121h1M520 121h1M77 122h1M139 122h1M144 122h1M162 122h2M213 122h1M219 122h3M377 122h2M435 122h2M441 122h1M459 122h1M501 122h1M521 122h1M76 123h1M138 123h1M145 123h1M161 123h1M214 123h1M217 123h2M379 123h2M437 123h1M440 123h1M460 123h1M499 123h2M522 123h1M75 124h1M136 124h2M146 124h1M160 124h1M214 124h3M381 124h2M438 124h2M461 124h1M498 124h1M523 124h1M74 125h1M135 125h1M147 125h1M158 125h2M213 125h1M383 125h2M439 125h1M462 125h2M497 125h1M524 125h1M73 126h1M134 126h1M147 126h1M157 126h1M211 126h2M385 126h2M440 126h2M464 126h1M496 126h1M525 126h1M73 127h1M133 127h1M148 127h1M156 127h1M209 127h2M387 127h2M439 127h1M442 127h1M464 127h2M495 127h1M525 127h1M72 128h1M132 128h1M149 128h1M155 128h1M207 128h2M389 128h2M438 128h1M443 128h1M463 128h1M466 128h1M494 128h1M526 128h1M71 129h1M131 129h1M150 129h1M154 129h1M205 129h2M391 129h2M438 129h1M444 129h1M462 129h1M467 129h1M493 129h1M527 129h1M70 130h1M130 130h1M151 130h3M203 130h2M393 130h2M437 130h1M445 130h1M461 130h1M468 130h1M491 130h2M528 130h1M70 131h1M129 131h1M151 131h1M202 131h1M395 131h2M436 131h1M446 131h2M460 131h1M469 131h1M490 131h1M528 131h1M69 132h1M128 132h1M150 132h1M200 132h2M397 132h2M435 132h1M448 132h1M459 132h1M470 132h1M489 132h1M529 132h1M68 133h1M127 133h1M149 133h1M199 133h1M399 133h1M434 133h1M449 133h1M458 133h1M471 133h1M488 133h1M530 133h1M68 134h1M126 134h2M148 134h1M197 134h2M328 134h1M400 134h2M433 134h1M450 134h1M457 134h1M472 134h1M487 134h1M530 134h1M67 135h1M125 135h1M128 135h1M147 135h1M196 135h1M327 135h1M402 135h1M433 135h1M451 135h1M456 135h1M473 135h1M486 135h1M531 135h1M66 136h1M124 136h1M129 136h1M146 136h1M194 136h2M327 136h1M403 136h2M432 136h1M452 136h1M455 136h1M474 136h1M485 136h1M532 136h1M66 137h1M124 137h1M130 137h1M145 137h1M192 137h2M326 137h1M405 137h2M431 137h1M453 137h2M474 137h1M483 137h2M532 137h1M65 138h1M123 138h1M131 138h1M144 138h1M191 138h1M325 138h1M407 138h1M430 138h1M454 138h1M475 138h1M482 138h1M533 138h1M65 139h1M122 139h1M132 139h1M143 139h1M189 139h2M325 139h1M408 139h2M429 139h1M455 139h1M476 139h1M481 139h1M533 139h1M64 140h1M121 140h1M133 140h1M142 140h1M188 140h1M324 140h1M410 140h1M429 140h1M456 140h1M477 140h1M480 140h1M534 140h1M63 141h1M120 141h1M134 141h1M141 141h1M186 141h2M324 141h1M411 141h2M428 141h1M457 141h1M478 141h2M535 141h1M63 142h1M119 142h1M135 142h1M140 142h1M185 142h1M323 142h1M413 142h1M427 142h1M458 142h1M478 142h2M535 142h1M62 143h1M119 143h1M136 143h1M139 143h1M184 143h1M322 143h1M414 143h1M426 143h1M459 143h1M477 143h1M479 143h1M536 143h1M61 144h1M118 144h1M137 144h2M182 144h2M322 144h1M415 144h2M425 144h1M460 144h1M476 144h1M480 144h1M537 144h1M61 145h1M117 145h1M137 145h1M181 145h1M321 145h1M417 145h1M424 145h1M461 145h1M475 145h1M481 145h1M537 145h1M60 146h1M116 146h1M136 146h1M180 146h1M418 146h1M424 146h1M462 146h1M473 146h2M482 146h1M538 146h1M59 147h1M115 147h1M135 147h1M179 147h1M419 147h1M423 147h1M463 147h1M472 147h1M483 147h1M539 147h1M59 148h1M114 148h1M134 148h1M177 148h2M420 148h1M422 148h1M464 148h1M471 148h1M484 148h1M539 148h1M58 149h1M113 149h1M133 149h1M176 149h1M421 149h1M465 149h1M470 149h1M485 149h1M540 149h1M57 150h1M113 150h1M132 150h1M175 150h1M423 150h1M466 150h1M469 150h1M485 150h1M541 150h1M57 151h1M112 151h1M114 151h1M131 151h1M174 151h1M424 151h1M467 151h2M486 151h1M541 151h1M56 152h1M111 152h1M115 152h2M130 152h1M173 152h1M425 152h1M468 152h1M487 152h1M542 152h1M55 153h1M110 153h1M117 153h1M130 153h1M171 153h2M426 153h2M468 153h1M488 153h1M543 153h1M55 154h1M110 154h1M118 154h1M129 154h1M170 154h1M428 154h1M469 154h1M488 154h1M543 154h1M54 155h1M109 155h1M119 155h1M128 155h1M169 155h1M429 155h1M470 155h1M489 155h1M544 155h1M54 156h1M108 156h1M120 156h1M127 156h1M168 156h1M430 156h1M471 156h1M490 156h1M544 156h1M53 157h1M107 157h1M121 157h2M126 157h1M167 157h1M431 157h1M472 157h1M491 157h1M545 157h1M52 158h1M107 158h1M123 158h1M125 158h1M166 158h1M432 158h1M473 158h1M491 158h1M546 158h1M52 159h1M106 159h1M124 159h2M165 159h1M433 159h1M473 159h1M489 159h2M492 159h1M546 159h1M51 160h1M105 160h1M124 160h1M164 160h1M434 160h1M474 160h1M488 160h1M493 160h1M547 160h1M51 161h1M105 161h1M123 161h1M163 161h1M435 161h1M475 161h1M487 161h1M493 161h1M547 161h1M50 162h1M104 162h1M122 162h1M162 162h1M436 162h1M476 162h1M485 162h2M494 162h1M548 162h1M50 163h1M103 163h1M122 163h1M161 163h1M437 163h1M476 163h1M484 163h1M495 163h1M548 163h1M49 164h1M102 164h1M121 164h1M160 164h1M438 164h1M477 164h1M483 164h1M496 164h1M549 164h1M49 165h1M102 165h1M120 165h1M159 165h1M439 165h1M478 165h1M481 165h2M496 165h1M549 165h1M48 166h1M101 166h1M119 166h1M158 166h1M440 166h1M479 166h2M497 166h1M550 166h1M48 167h1M100 167h2M119 167h1M157 167h1M441 167h1M479 167h1M498 167h1M550 167h1M47 168h1M100 168h1M102 168h2M118 168h1M156 168h1M442 168h1M480 168h1M498 168h1M551 168h1M47 169h1M99 169h1M104 169h1M117 169h1M155 169h1M443 169h1M481 169h1M499 169h1M551 169h1M46 170h1M98 170h1M105 170h1M116 170h1M154 170h1M444 170h1M482 170h1M500 170h1M552 170h1M46 171h1M97 171h1M106 171h2M115 171h1M153 171h1M445 171h1M483 171h1M501 171h1M552 171h1M45 172h1M97 172h1M108 172h1M115 172h1M153 172h1M445 172h1M483 172h1M501 172h1M553 172h1M45 173h1M96 173h1M109 173h1M114 173h1M152 173h1M446 173h1M484 173h1M502 173h1M553 173h1M44 174h1M95 174h1M110 174h2M113 174h1M151 174h1M447 174h1M485 174h1M503 174h1M554 174h1M44 175h1M95 175h1M112 175h1M150 175h1M448 175h1M486 175h1M503 175h1M554 175h1M44 176h1M94 176h1M112 176h1M149 176h1M449 176h1M486 176h1M501 176h2M504 176h1M554 176h1M43 177h1M94 177h1M111 177h1M148 177h1M450 177h1M487 177h1M499 177h2M504 177h1M555 177h1M43 178h1M93 178h1M111 178h1M148 178h1M450 178h1M487 178h1M497 178h2M505 178h1M555 178h1M42 179h1M93 179h1M110 179h1M147 179h1M451 179h1M488 179h1M496 179h1M505 179h1M556 179h1M42 180h1M92 180h1M110 180h1M146 180h1M452 180h1M488 180h1M494 180h2M506 180h1M556 180h1M41 181h1M91 181h1M109 181h1M145 181h1M453 181h1M489 181h1M492 181h2M507 181h1M557 181h1M41 182h1M91 182h1M108 182h1M144 182h1M454 182h1M490 182h2M507 182h1M557 182h1M40 183h1M90 183h1M108 183h1M144 183h1M454 183h1M490 183h1M508 183h1M558 183h1M40 184h1M90 184h1M107 184h1M143 184h1M455 184h1M491 184h1M508 184h1M558 184h1M40 185h1M89 185h2M106 185h2M142 185h1M456 185h1M492 185h1M509 185h1M558 185h1M39 186h1M89 186h1M91 186h2M106 186h1M108 186h2M141 186h1M457 186h1M492 186h1M509 186h1M559 186h1M39 187h1M88 187h1M93 187h2M105 187h1M110 187h1M141 187h1M457 187h1M493 187h1M510 187h1M559 187h1M38 188h1M87 188h1M95 188h2M104 188h1M111 188h2M140 188h1M458 188h1M494 188h1M511 188h1M560 188h1M38 189h1M87 189h1M97 189h2M104 189h1M113 189h2M139 189h1M459 189h1M494 189h1M511 189h1M560 189h1M37 190h1M86 190h1M99 190h2M103 190h1M115 190h1M139 190h1M459 190h1M495 190h1M512 190h1M561 190h1M37 191h1M86 191h1M101 191h3M116 191h2M138 191h1M460 191h1M495 191h1M512 191h1M561 191h1M36 192h1M85 192h1M102 192h1M118 192h1M137 192h1M461 192h1M496 192h1M513 192h1M562 192h1M36 193h1M85 193h1M102 193h1M119 193h2M137 193h1M461 193h1M496 193h1M513 193h1M562 193h1M36 194h1M84 194h1M101 194h1M121 194h2M136 194h1M462 194h1M497 194h1M512 194h3M562 194h1M35 195h1M84 195h1M101 195h1M123 195h1M136 195h1M462 195h1M497 195h1M510 195h2M514 195h1M563 195h1M35 196h1M84 196h1M100 196h1M124 196h2M135 196h1M463 196h1M498 196h1M508 196h2M514 196h1M563 196h1M34 197h1M83 197h1M100 197h1M126 197h1M134 197h1M464 197h1M498 197h1M506 197h2M515 197h1M564 197h1M34 198h1M83 198h1M99 198h1M127 198h2M134 198h1M464 198h1M499 198h1M504 198h2M515 198h1M564 198h1M33 199h1M82 199h1M99 199h1M129 199h2M133 199h1M465 199h1M499 199h1M502 199h2M516 199h1M565 199h1M33 200h1M82 200h1M98 200h1M131 200h2M466 200h1M500 200h2M516 200h1M565 200h1M32 201h1M81 201h1M98 201h1M132 201h1M466 201h1M500 201h1M517 201h1M566 201h1M32 202h1M81 202h1M97 202h1M131 202h1M467 202h1M501 202h1M517 202h1M566 202h1M32 203h1M80 203h1M97 203h1M130 203h1M468 203h1M501 203h1M518 203h1M566 203h1M31 204h1M80 204h3M96 204h1M130 204h1M468 204h1M502 204h1M518 204h1M567 204h1M31 205h1M79 205h1M83 205h2M96 205h1M129 205h1M469 205h1M502 205h1M519 205h1M567 205h1M31 206h1M79 206h1M85 206h2M95 206h1M129 206h1M469 206h1M503 206h1M519 206h1M567 206h1M30 207h1M78 207h1M87 207h3M95 207h1M128 207h1M470 207h1M503 207h1M520 207h1M568 207h1M30 208h1M78 208h1M90 208h2M94 208h1M128 208h1M470 208h1M504 208h1M520 208h1M568 208h1M30 209h3M77 209h1M92 209h3M127 209h1M471 209h1M502 209h3M521 209h1M568 209h1M30 210h1M33 210h3M77 210h1M93 210h1M127 210h1M471 210h1M500 210h2M505 210h1M521 210h1M568 210h1M29 211h1M36 211h3M77 211h1M93 211h1M126 211h1M472 211h1M498 211h2M505 211h1M521 211h1M569 211h1M29 212h1M39 212h3M76 212h1M92 212h1M126 212h1M472 212h1M496 212h2M506 212h1M522 212h1M569 212h1M29 213h1M42 213h3M76 213h1M92 213h1M125 213h1M473 213h1M494 213h2M506 213h1M520 213h3M569 213h1M28 214h1M45 214h3M75 214h1M91 214h1M125 214h1M473 214h1M492 214h2M507 214h1M518 214h2M523 214h1M570 214h1M28 215h1M48 215h3M75 215h1M91 215h1M124 215h1M474 215h1M489 215h3M507 215h1M515 215h3M523 215h1M570 215h1M28 216h1M51 216h2M75 216h1M91 216h1M124 216h1M474 216h1M487 216h2M507 216h1M512 216h3M523 216h1M570 216h1M27 217h1M53 217h3M74 217h1M90 217h1M123 217h1M475 217h1M485 217h2M508 217h1M510 217h2M524 217h1M571 217h1M27 218h1M56 218h3M74 218h1M90 218h1M123 218h1M475 218h1M483 218h2M508 218h2M524 218h1M571 218h1M27 219h1M59 219h3M74 219h1M90 219h1M122 219h1M476 219h1M481 219h2M508 219h1M524 219h1M571 219h1M26 220h1M62 220h3M73 220h1M90 220h1M122 220h1M476 220h1M479 220h2M508 220h1M525 220h1M572 220h1M26 221h1M65 221h3M73 221h1M89 221h1M122 221h1M446 221h2M476 221h3M509 221h1M525 221h1M572 221h1M26 222h1M68 222h3M73 222h1M89 222h1M121 222h1M444 222h2M477 222h1M509 222h1M525 222h1M572 222h1M25 223h1M71 223h4M89 223h1M121 223h1M442 223h2M477 223h1M509 223h1M525 223h1M573 223h1M25 224h1M72 224h1M75 224h3M89 224h1M120 224h1M440 224h2M478 224h1M509 224h1M526 224h1M573 224h1M25 225h1M72 225h1M78 225h4M88 225h1M120 225h1M438 225h2M478 225h1M510 225h1M526 225h1M573 225h1M24 226h1M72 226h1M82 226h3M88 226h1M119 226h1M436 226h2M479 226h1M510 226h1M526 226h1M574 226h1M24 227h1M71 227h1M85 227h3M119 227h1M479 227h1M511 227h1M527 227h1M574 227h1M24 228h1M71 228h1M87 228h1M119 228h1M479 228h1M511 228h1M527 228h1M574 228h1M24 229h1M70 229h1M86 229h1M118 229h1M480 229h1M512 229h1M528 229h1M574 229h1M23 230h1M70 230h1M86 230h1M118 230h1M480 230h1M512 230h1M528 230h1M575 230h1M23 231h1M70 231h1M86 231h1M118 231h1M480 231h1M512 231h1M528 231h1M575 231h1M23 232h1M69 232h1M85 232h1M117 232h1M481 232h1M513 232h1M527 232h3M575 232h1M23 233h1M69 233h1M85 233h1M117 233h1M481 233h1M513 233h1M524 233h3M529 233h1M575 233h1M22 234h1M69 234h1M85 234h1M117 234h1M481 234h1M513 234h1M520 234h4M529 234h1M576 234h1M22 235h1M69 235h1M85 235h1M116 235h1M482 235h1M513 235h1M517 235h3M529 235h1M576 235h1M22 236h1M68 236h1M84 236h1M116 236h1M482 236h1M514 236h3M530 236h1M576 236h1M22 237h1M68 237h1M84 237h1M116 237h1M482 237h1M514 237h1M530 237h1M576 237h1M21 238h1M68 238h1M84 238h1M115 238h1M483 238h1M514 238h1M530 238h1M577 238h1M21 239h1M68 239h1M84 239h1M115 239h1M483 239h1M514 239h1M530 239h1M577 239h1M21 240h1M67 240h1M83 240h1M115 240h1M483 240h1M515 240h1M531 240h1M577 240h1M21 241h1M67 241h1M83 241h1M114 241h1M484 241h1M515 241h1M531 241h1M577 241h1M21 242h1M67 242h1M83 242h1M114 242h1M484 242h1M515 242h1M531 242h1M577 242h1M20 243h1M67 243h3M83 243h1M114 243h1M484 243h1M515 243h1M531 243h1M578 243h1M20 244h1M66 244h1M70 244h4M82 244h1M114 244h1M484 244h1M516 244h1M532 244h1M575 244h4M20 245h1M66 245h1M74 245h5M82 245h1M113 245h1M485 245h1M516 245h1M532 245h1M569 245h6M578 245h1M20 246h1M66 246h1M79 246h4M113 246h1M485 246h1M516 246h1M532 246h1M564 246h5M578 246h1M20 247h1M66 247h1M81 247h1M113 247h1M485 247h1M517 247h1M532 247h1M559 247h5M578 247h1M19 248h1M65 248h1M81 248h1M112 248h1M486 248h1M517 248h1M533 248h1M553 248h6M579 248h1M19 249h1M65 249h1M81 249h1M112 249h1M486 249h1M517 249h1M533 249h1M548 249h5M579 249h1M19 250h1M65 250h1M81 250h1M112 250h1M486 250h1M517 250h1M533 250h1M543 250h5M579 250h1M19 251h1M65 251h1M80 251h1M111 251h1M487 251h1M518 251h1M533 251h1M537 251h6M579 251h1M19 252h1M65 252h1M80 252h1M111 252h1M487 252h1M518 252h1M533 252h4M579 252h1M19 253h1M65 253h1M80 253h1M111 253h1M487 253h1M518 253h1M530 253h4M579 253h1M19 254h1M64 254h1M80 254h1M110 254h1M488 254h1M518 254h1M523 254h7M534 254h1M579 254h1M18 255h1M64 255h1M79 255h1M110 255h1M488 255h1M519 255h4M534 255h1M580 255h1M18 256h1M64 256h1M79 256h1M110 256h1M488 256h1M519 256h1M534 256h1M580 256h1M18 257h1M64 257h1M79 257h1M110 257h1M488 257h1M519 257h1M534 257h1M580 257h1M18 258h1M64 258h1M79 258h1M109 258h1M489 258h1M519 258h1M534 258h1M580 258h1M18 259h1M64 259h1M78 259h1M109 259h1M489 259h1M520 259h1M534 259h1M580 259h1M18 260h1M63 260h1M78 260h1M109 260h1M489 260h1M520 260h1M535 260h1M580 260h1M18 261h1M63 261h1M78 261h1M109 261h1M489 261h1M520 261h1M535 261h1M580 261h1M18 262h1M63 262h1M78 262h1M109 262h1M489 262h1M520 262h1M535 262h1M580 262h1M18 263h1M63 263h4M78 263h1M108 263h1M490 263h1M520 263h1M535 263h1M580 263h1M18 264h1M62 264h1M67 264h7M78 264h1M108 264h1M490 264h1M520 264h1M536 264h1M580 264h1M17 265h1M62 265h1M74 265h4M108 265h1M490 265h1M521 265h1M536 265h1M581 265h1M17 266h1M62 266h1M77 266h1M108 266h1M490 266h1M521 266h1M536 266h1M581 266h1M17 267h1M62 267h1M77 267h1M108 267h1M490 267h1M521 267h1M536 267h1M581 267h1M17 268h1M62 268h1M77 268h1M108 268h1M490 268h1M521 268h1M536 268h1M581 268h1M17 269h1M62 269h1M77 269h1M107 269h1M491 269h1M521 269h1M536 269h1M581 269h1M17 270h1M61 270h1M77 270h1M107 270h1M491 270h1M521 270h1M537 270h1M581 270h1M17 271h1M61 271h1M77 271h1M107 271h1M491 271h1M521 271h1M537 271h1M581 271h1M17 272h1M61 272h1M76 272h1M107 272h1M491 272h1M522 272h1M537 272h1M581 272h1M17 273h1M61 273h1M76 273h1M107 273h1M491 273h1M522 273h1M533 273h5M581 273h1M17 274h1M61 274h1M76 274h1M107 274h1M491 274h1M522 274h1M526 274h7M537 274h1M581 274h1M16 275h1M61 275h1M76 275h1M107 275h1M491 275h1M522 275h4M537 275h1M582 275h1M16 276h1M61 276h1M76 276h1M106 276h1M492 276h1M522 276h1M537 276h1M582 276h1M16 277h1M61 277h1M76 277h1M106 277h1M492 277h1M522 277h1M537 277h1M582 277h1M16 278h1M61 278h1M76 278h1M106 278h1M492 278h1M522 278h1M537 278h1M582 278h1M16 279h1M61 279h1M76 279h1M106 279h1M492 279h1M522 279h1M537 279h1M582 279h1M16 280h1M61 280h1M76 280h1M106 280h1M492 280h1M522 280h1M537 280h1M582 280h1M16 281h1M61 281h1M76 281h1M106 281h1M492 281h1M522 281h1M537 281h1M582 281h1M16 282h1M61 282h1M76 282h1M106 282h1M492 282h1M522 282h1M537 282h1M582 282h1M16 283h1M61 283h1M76 283h1M105 283h1M493 283h1M522 283h1M537 283h1M582 283h1M16 284h1M61 284h7M76 284h1M105 284h1M493 284h1M522 284h1M537 284h1M582 284h1M15 285h1M61 285h1M68 285h9M105 285h1M493 285h1M522 285h1M537 285h1M583 285h1M15 286h1M61 286h1M76 286h1M105 286h1M493 286h1M522 286h1M537 286h1M583 286h1M15 287h1M60 287h1M76 287h1M105 287h1M493 287h1M522 287h1M538 287h1M583 287h1M15 288h1M60 288h1M75 288h1M105 288h1M493 288h1M523 288h1M538 288h1M583 288h1M15 289h1M60 289h1M75 289h1M105 289h1M493 289h1M523 289h1M538 289h1M583 289h1M15 290h1M60 290h1M75 290h1M105 290h1M493 290h1M523 290h1M538 290h1M583 290h1M15 291h1M60 291h1M75 291h1M105 291h1M493 291h1M523 291h1M538 291h1M583 291h1M15 292h1M60 292h1M75 292h1M105 292h1M493 292h1M523 292h1M538 292h1M583 292h1M15 293h1M60 293h1M75 293h1M105 293h1M493 293h1M523 293h1M538 293h1M583 293h1M15 294h1M60 294h1M75 294h1M105 294h1M493 294h1M523 294h16M583 294h1M15 295h1M60 295h1M75 295h1M105 295h1M493 295h1M523 295h1M538 295h1M583 295h1M15 296h1M60 296h1M75 296h1M105 296h1M493 296h1M523 296h1M538 296h1M583 296h1M15 297h1M60 297h1M75 297h1M105 297h1M493 297h1M523 297h1M538 297h1M583 297h1M15 298h1M60 298h1M75 298h1M105 298h1M493 298h1M523 298h1M538 298h1M583 298h1M15 299h1M60 299h1M75 299h31M131 299h13M493 299h31M538 299h1M583 299h1M15 300h1M60 300h1M75 300h1M105 300h1M493 300h1M523 300h1M538 300h1M583 300h1M15 301h1M60 301h1M75 301h1M105 301h1M493 301h1M523 301h1M538 301h1M583 301h1M15 302h1M60 302h1M75 302h1M105 302h1M493 302h1M523 302h1M538 302h1M583 302h1M15 303h1M60 303h1M75 303h1M105 303h1M493 303h1M523 303h1M538 303h1M583 303h1M15 304h1M60 304h16M105 304h1M493 304h1M523 304h1M538 304h1M583 304h1M15 305h1M60 305h1M75 305h1M105 305h1M493 305h1M523 305h1M538 305h1M583 305h1M15 306h1M60 306h1M75 306h1M105 306h1M493 306h1M523 306h1M538 306h1M583 306h1M15 307h1M60 307h1M75 307h1M105 307h1M493 307h1M523 307h1M538 307h1M583 307h1M15 308h1M60 308h1M75 308h1M105 308h1M144 308h1M493 308h1M523 308h1M538 308h1M583 308h1M15 309h1M60 309h1M75 309h1M105 309h1M142 309h2M493 309h1M523 309h1M538 309h1M583 309h1M15 310h1M60 310h1M76 310h1M105 310h1M141 310h1M493 310h1M522 310h1M538 310h1M583 310h1M15 311h1M61 311h1M76 311h1M105 311h1M139 311h2M493 311h1M522 311h1M537 311h1M583 311h1M15 312h1M61 312h1M76 312h1M105 312h1M138 312h1M493 312h1M522 312h1M537 312h1M583 312h1M16 313h1M61 313h1M76 313h1M105 313h1M136 313h2M493 313h1M522 313h8M537 313h1M582 313h1M16 314h1M61 314h1M76 314h1M105 314h1M135 314h1M493 314h1M522 314h1M530 314h8M582 314h1M16 315h1M61 315h1M76 315h1M105 315h1M133 315h2M493 315h1M522 315h1M537 315h1M582 315h1M16 316h1M61 316h1M76 316h1M106 316h1M132 316h1M492 316h1M522 316h1M537 316h1M582 316h1M16 317h1M61 317h1M76 317h1M106 317h1M492 317h1M522 317h1M537 317h1M582 317h1M16 318h1M61 318h1M76 318h1M106 318h1M492 318h1M522 318h1M537 318h1M582 318h1M16 319h1M61 319h1M76 319h1M106 319h1M492 319h1M522 319h1M537 319h1M582 319h1M16 320h1M61 320h1M76 320h1M106 320h1M492 320h1M522 320h1M537 320h1M582 320h1M16 321h1M61 321h1M76 321h1M106 321h1M492 321h1M522 321h1M537 321h1M582 321h1M16 322h1M61 322h1M76 322h1M106 322h1M492 322h1M522 322h1M537 322h1M582 322h1M17 323h1M61 323h1M73 323h4M107 323h1M491 323h1M522 323h1M537 323h1M581 323h1M17 324h1M61 324h1M66 324h7M76 324h1M107 324h1M491 324h1M522 324h1M537 324h1M581 324h1M17 325h1M61 325h5M76 325h1M107 325h1M491 325h1M522 325h1M537 325h1M581 325h1M17 326h1M61 326h1M77 326h1M107 326h1M491 326h1M521 326h1M537 326h1M581 326h1M17 327h1M61 327h1M77 327h1M107 327h1M491 327h1M521 327h1M537 327h1M581 327h1M17 328h1M62 328h1M77 328h1M107 328h1M491 328h1M521 328h1M536 328h1M581 328h1M17 329h1M62 329h1M77 329h1M108 329h1M490 329h1M521 329h1M536 329h1M581 329h1M17 330h1M62 330h1M77 330h1M108 330h1M490 330h1M521 330h1M536 330h1M581 330h1M17 331h1M62 331h1M77 331h1M108 331h1M490 331h1M521 331h1M536 331h1M581 331h1M17 332h1M62 332h1M77 332h1M108 332h1M490 332h1M521 332h1M536 332h1M581 332h1M18 333h1M62 333h1M77 333h1M108 333h1M490 333h1M521 333h4M536 333h1M580 333h1M18 334h1M63 334h1M78 334h1M108 334h1M490 334h1M520 334h1M525 334h7M535 334h1M580 334h1M18 335h1M63 335h1M78 335h1M108 335h1M490 335h1M520 335h1M532 335h4M580 335h1M18 336h1M63 336h1M78 336h1M109 336h1M489 336h1M520 336h1M535 336h1M580 336h1M18 337h1M63 337h1M78 337h1M109 337h1M489 337h1M520 337h1M535 337h1M580 337h1M18 338h1M64 338h1M78 338h1M109 338h1M489 338h1M520 338h1M534 338h1M580 338h1M18 339h1M64 339h1M79 339h1M109 339h1M489 339h1M519 339h1M534 339h1M580 339h1M18 340h1M64 340h1M79 340h1M109 340h1M489 340h1M519 340h1M534 340h1M580 340h1M18 341h1M64 341h1M79 341h1M110 341h1M488 341h1M519 341h1M534 341h1M580 341h1M18 342h1M64 342h1M79 342h1M110 342h1M488 342h1M519 342h1M534 342h1M580 342h1M19 343h1M64 343h1M76 343h5M110 343h1M488 343h1M518 343h1M534 343h1M579 343h1M19 344h1M65 344h1M69 344h7M80 344h1M110 344h1M488 344h1M518 344h1M533 344h1M579 344h1M19 345h1M65 345h4M80 345h1M111 345h1M487 345h1M518 345h1M533 345h1M579 345h1M19 346h1M62 346h4M80 346h1M111 346h1M487 346h1M518 346h1M533 346h1M579 346h1M19 347h1M56 347h6M65 347h1M81 347h1M111 347h1M487 347h1M517 347h1M533 347h1M579 347h1M19 348h1M51 348h5M65 348h1M81 348h1M112 348h1M486 348h1M517 348h1M533 348h1M579 348h1M19 349h1M46 349h5M65 349h1M81 349h1M112 349h1M486 349h1M517 349h1M533 349h1M579 349h1M19 350h1M40 350h6M66 350h1M81 350h1M112 350h1M486 350h1M517 350h1M532 350h1M579 350h1M20 351h1M35 351h5M66 351h1M82 351h1M113 351h1M485 351h1M516 351h1M532 351h1M578 351h1M20 352h1M30 352h5M66 352h1M82 352h1M113 352h1M485 352h1M516 352h4M532 352h1M578 352h1M20 353h1M24 353h6M66 353h1M82 353h1M113 353h1M485 353h1M516 353h1M520 353h4M532 353h1M578 353h1M20 354h4M67 354h1M82 354h1M114 354h1M484 354h1M516 354h1M524 354h5M531 354h1M578 354h1M20 355h1M67 355h1M83 355h1M114 355h1M484 355h1M515 355h1M529 355h3M578 355h1M21 356h1M67 356h1M83 356h1M114 356h1M484 356h1M515 356h1M531 356h1M577 356h1M21 357h1M67 357h1M83 357h1M114 357h1M484 357h1M515 357h1M531 357h1M577 357h1M21 358h1M67 358h1M83 358h1M115 358h1M483 358h1M515 358h1M531 358h1M577 358h1M21 359h1M68 359h1M84 359h1M115 359h1M483 359h1M514 359h1M530 359h1M577 359h1M21 360h1M68 360h1M84 360h1M115 360h1M483 360h1M514 360h1M530 360h1M577 360h1M22 361h1M68 361h1M84 361h1M116 361h1M482 361h1M514 361h1M530 361h1M576 361h1M22 362h1M68 362h1M82 362h2M85 362h1M116 362h1M482 362h1M513 362h1M530 362h1M576 362h1M22 363h1M69 363h1M79 363h3M85 363h1M116 363h1M482 363h1M513 363h1M529 363h1M576 363h1M22 364h1M69 364h1M75 364h4M85 364h1M117 364h1M481 364h1M513 364h1M529 364h1M576 364h1M23 365h1M69 365h1M72 365h3M85 365h1M117 365h1M481 365h1M513 365h1M529 365h1M575 365h1M23 366h1M69 366h3M86 366h1M117 366h1M481 366h1M512 366h1M529 366h1M575 366h1M23 367h1M70 367h1M86 367h1M118 367h1M480 367h1M512 367h1M528 367h1M575 367h1M23 368h1M70 368h1M86 368h1M118 368h1M480 368h1M512 368h1M528 368h1M575 368h1M24 369h1M71 369h1M86 369h1M118 369h1M480 369h1M512 369h1M527 369h1M574 369h1M24 370h1M71 370h1M87 370h1M119 370h1M479 370h1M511 370h1M527 370h1M574 370h1M24 371h1M71 371h1M87 371h1M119 371h1M479 371h1M511 371h3M527 371h1M574 371h1M25 372h1M72 372h1M88 372h1M119 372h1M479 372h1M510 372h1M514 372h3M526 372h1M573 372h1M25 373h1M72 373h1M88 373h1M120 373h1M478 373h1M510 373h1M517 373h4M526 373h1M573 373h1M25 374h1M72 374h1M89 374h1M120 374h1M478 374h1M509 374h1M521 374h3M526 374h1M573 374h1M25 375h1M73 375h1M89 375h1M121 375h1M477 375h1M509 375h1M524 375h4M573 375h1M26 376h1M73 376h1M89 376h1M121 376h1M477 376h1M509 376h1M525 376h1M528 376h3M572 376h1M26 377h1M73 377h1M90 377h1M120 377h3M476 377h1M508 377h1M525 377h1M531 377h3M572 377h1M26 378h1M73 378h1M90 378h1M118 378h2M122 378h1M476 378h1M508 378h1M525 378h1M534 378h3M572 378h1M27 379h1M74 379h1M90 379h1M116 379h2M123 379h1M475 379h1M508 379h1M524 379h1M537 379h3M571 379h1M27 380h1M74 380h1M89 380h2M114 380h2M123 380h1M475 380h1M508 380h1M524 380h1M540 380h3M571 380h1M27 381h1M74 381h1M87 381h2M91 381h1M112 381h2M124 381h1M474 381h1M507 381h1M524 381h1M543 381h3M571 381h1M28 382h1M75 382h1M84 382h3M91 382h1M110 382h2M124 382h1M474 382h1M507 382h1M523 382h1M546 382h2M570 382h1M28 383h1M75 383h1M81 383h3M91 383h1M107 383h3M125 383h1M473 383h1M507 383h1M523 383h1M548 383h3M570 383h1M28 384h1M76 384h1M79 384h2M91 384h1M105 384h2M125 384h1M473 384h1M507 384h1M522 384h1M551 384h3M570 384h1M29 385h1M76 385h3M92 385h1M103 385h2M126 385h1M472 385h1M506 385h1M522 385h1M554 385h3M569 385h1M29 386h1M76 386h1M92 386h1M101 386h2M126 386h1M472 386h1M506 386h1M522 386h1M557 386h3M569 386h1M29 387h1M77 387h1M93 387h1M99 387h2M127 387h1M471 387h1M505 387h1M521 387h1M560 387h3M569 387h1M30 388h1M77 388h1M93 388h1M97 388h2M127 388h1M471 388h1M505 388h1M521 388h1M563 388h3M568 388h1M30 389h1M78 389h1M94 389h3M128 389h1M470 389h1M504 389h3M520 389h1M566 389h3M30 390h1M78 390h1M94 390h1M128 390h1M470 390h1M504 390h1M507 390h2M520 390h1M568 390h1M31 391h1M79 391h1M95 391h1M129 391h1M469 391h1M503 391h1M509 391h2M519 391h1M567 391h1M31 392h1M79 392h1M95 392h1M129 392h1M469 392h1M503 392h1M511 392h3M519 392h1M567 392h1M31 393h1M80 393h1M96 393h1M130 393h1M468 393h1M502 393h1M514 393h2M518 393h1M567 393h1M31 394h1M80 394h1M96 394h1M130 394h1M468 394h1M502 394h1M516 394h3M567 394h1M32 395h1M81 395h1M97 395h1M131 395h1M467 395h1M501 395h1M517 395h1M566 395h1M32 396h1M81 396h1M97 396h1M131 396h1M467 396h1M501 396h1M517 396h1M566 396h1M32 397h1M81 397h1M98 397h1M132 397h1M466 397h1M500 397h1M517 397h1M566 397h1M33 398h1M82 398h1M97 398h2M132 398h1M466 398h2M500 398h1M516 398h1M565 398h1M33 399h1M82 399h1M95 399h2M99 399h1M133 399h1M418 399h1M465 399h1M468 399h2M499 399h1M516 399h1M565 399h1M34 400h1M83 400h1M93 400h2M99 400h1M134 400h1M419 400h1M464 400h1M470 400h1M499 400h1M515 400h1M564 400h1M34 401h1M83 401h1M91 401h2M100 401h1M134 401h1M420 401h1M464 401h1M471 401h2M498 401h1M515 401h1M564 401h1M35 402h1M84 402h1M89 402h2M100 402h1M135 402h1M421 402h1M463 402h1M473 402h2M498 402h1M514 402h1M563 402h1M35 403h1M84 403h1M87 403h2M101 403h1M136 403h1M422 403h2M462 403h1M475 403h1M497 403h1M514 403h1M563 403h1M36 404h1M85 404h2M101 404h1M136 404h1M424 404h1M462 404h1M476 404h2M497 404h1M513 404h1M562 404h1M36 405h1M85 405h1M102 405h1M137 405h1M425 405h1M461 405h1M478 405h1M496 405h1M513 405h1M562 405h1M36 406h1M86 406h1M102 406h1M137 406h1M426 406h1M461 406h1M479 406h2M496 406h1M512 406h1M562 406h1M37 407h1M86 407h1M103 407h1M138 407h1M427 407h1M460 407h1M481 407h2M495 407h2M512 407h1M561 407h1M37 408h1M87 408h1M103 408h1M139 408h1M459 408h1M483 408h1M495 408h1M497 408h2M511 408h1M561 408h1M38 409h1M87 409h1M104 409h1M139 409h1M459 409h1M484 409h2M494 409h1M499 409h2M511 409h1M560 409h1M38 410h1M88 410h1M104 410h1M140 410h1M458 410h1M486 410h1M494 410h1M501 410h2M510 410h1M560 410h1M39 411h1M88 411h1M105 411h1M141 411h1M457 411h1M487 411h2M493 411h1M503 411h2M510 411h1M559 411h1M39 412h1M89 412h1M106 412h1M141 412h1M457 412h1M489 412h2M492 412h1M505 412h2M509 412h1M559 412h1M40 413h1M89 413h1M106 413h1M142 413h1M456 413h1M491 413h2M507 413h3M558 413h1M40 414h1M90 414h1M107 414h1M143 414h1M404 414h1M455 414h1M491 414h1M508 414h1M558 414h1M40 415h1M90 415h1M108 415h1M144 415h1M405 415h1M454 415h1M490 415h1M508 415h1M558 415h1M41 416h1M91 416h1M107 416h2M144 416h1M406 416h1M454 416h1M490 416h1M507 416h1M557 416h1M41 417h1M91 417h1M105 417h2M109 417h1M145 417h1M407 417h1M453 417h1M489 417h1M507 417h1M557 417h1M42 418h1M92 418h1M103 418h2M110 418h1M146 418h1M408 418h1M452 418h1M488 418h1M506 418h1M556 418h1M42 419h1M93 419h1M101 419h2M110 419h1M147 419h1M200 419h1M409 419h1M451 419h1M488 419h1M505 419h1M556 419h1M43 420h1M93 420h1M100 420h1M111 420h1M148 420h1M199 420h1M410 420h1M450 420h1M487 420h1M505 420h1M555 420h1M43 421h1M94 421h1M98 421h2M111 421h1M149 421h1M197 421h2M411 421h1M449 421h1M487 421h1M504 421h1M555 421h1M44 422h1M94 422h1M96 422h2M112 422h1M149 422h1M196 422h1M412 422h1M449 422h1M486 422h1M504 422h1M554 422h1M44 423h1M95 423h1M112 423h1M150 423h1M195 423h1M448 423h1M486 423h1M503 423h1M554 423h1M44 424h1M95 424h1M113 424h1M151 424h1M194 424h1M447 424h1M485 424h1M487 424h2M503 424h1M554 424h1M45 425h1M96 425h1M114 425h1M152 425h1M192 425h2M446 425h1M484 425h1M489 425h1M502 425h1M553 425h1M45 426h1M97 426h1M115 426h1M153 426h1M191 426h1M445 426h1M483 426h1M490 426h1M501 426h1M553 426h1M46 427h1M97 427h1M116 427h1M153 427h1M190 427h1M210 427h1M445 427h1M482 427h1M491 427h2M501 427h1M552 427h1M46 428h1M98 428h1M116 428h1M154 428h1M209 428h1M444 428h1M482 428h1M493 428h1M500 428h1M552 428h1M47 429h1M99 429h1M117 429h1M155 429h1M209 429h1M443 429h1M481 429h1M494 429h1M499 429h1M551 429h1M47 430h1M100 430h1M118 430h1M156 430h1M208 430h1M442 430h1M480 430h1M495 430h2M498 430h1M551 430h1M48 431h1M100 431h1M119 431h1M157 431h1M208 431h1M441 431h1M479 431h1M497 431h2M550 431h1M48 432h1M101 432h1M118 432h2M158 432h1M207 432h1M440 432h1M479 432h1M497 432h1M550 432h1M49 433h1M102 433h1M116 433h2M120 433h1M159 433h1M206 433h1M439 433h1M478 433h1M496 433h1M549 433h1M49 434h1M102 434h1M115 434h1M121 434h1M160 434h1M206 434h1M438 434h1M477 434h1M496 434h1M549 434h1M50 435h1M103 435h1M114 435h1M122 435h1M161 435h1M205 435h1M437 435h1M476 435h1M495 435h1M548 435h1M50 436h1M104 436h1M112 436h2M122 436h1M162 436h1M205 436h1M436 436h1M476 436h1M494 436h1M548 436h1M51 437h1M105 437h1M111 437h1M123 437h1M163 437h1M204 437h1M435 437h1M475 437h1M493 437h1M547 437h1M51 438h1M105 438h1M110 438h1M124 438h1M164 438h1M369 438h2M434 438h1M474 438h1M493 438h1M547 438h1M52 439h1M106 439h1M108 439h2M125 439h1M165 439h1M366 439h1M371 439h3M433 439h1M473 439h2M492 439h1M546 439h1M52 440h1M107 440h1M126 440h1M166 440h1M364 440h1M366 440h1M374 440h3M432 440h1M472 440h1M475 440h1M491 440h1M546 440h1M53 441h1M107 441h1M126 441h1M167 441h1M363 441h1M366 441h1M377 441h3M431 441h1M472 441h1M476 441h2M491 441h1M545 441h1M54 442h1M108 442h1M127 442h1M168 442h1M363 442h1M366 442h1M380 442h3M430 442h1M471 442h1M478 442h1M490 442h1M544 442h1M54 443h1M109 443h1M128 443h1M169 443h1M362 443h1M367 443h1M383 443h2M429 443h1M470 443h1M479 443h1M489 443h1M544 443h1M55 444h1M110 444h1M129 444h1M170 444h1M361 444h1M367 444h1M428 444h1M469 444h1M480 444h1M488 444h1M543 444h1M56 445h1M110 445h1M130 445h1M171 445h2M360 445h1M367 445h1M426 445h2M468 445h1M481 445h1M488 445h1M542 445h1M56 446h1M111 446h1M131 446h1M173 446h1M360 446h1M367 446h1M425 446h1M467 446h1M482 446h2M487 446h1M542 446h1M57 447h1M112 447h1M130 447h2M174 447h1M359 447h1M367 447h1M424 447h1M467 447h1M484 447h1M486 447h1M541 447h1M57 448h1M113 448h1M129 448h1M132 448h1M175 448h1M358 448h1M367 448h1M423 448h1M466 448h1M485 448h1M541 448h1M58 449h1M114 449h1M128 449h1M133 449h1M357 449h1M368 449h1M421 449h2M465 449h1M484 449h1M540 449h1M59 450h1M114 450h1M127 450h1M134 450h1M176 450h3M357 450h1M368 450h1M420 450h1M464 450h1M484 450h1M539 450h1M59 451h1M115 451h1M125 451h2M135 451h1M175 451h1M179 451h1M356 451h1M368 451h1M419 451h1M463 451h1M483 451h1M539 451h1M60 452h1M116 452h1M124 452h1M136 452h1M174 452h1M180 452h1M355 452h1M368 452h1M418 452h1M462 452h1M482 452h1M538 452h1M61 453h1M117 453h1M123 453h1M137 453h1M174 453h1M181 453h1M355 453h1M417 453h1M461 453h1M481 453h1M537 453h1M61 454h1M118 454h1M122 454h1M138 454h1M173 454h1M182 454h2M354 454h1M415 454h2M460 454h2M480 454h1M537 454h1M62 455h1M119 455h1M121 455h1M139 455h1M172 455h1M184 455h1M353 455h1M414 455h1M459 455h1M462 455h1M479 455h1M536 455h1M63 456h1M119 456h2M140 456h1M171 456h1M185 456h1M352 456h1M413 456h1M458 456h1M463 456h1M479 456h1M535 456h1M63 457h1M119 457h2M141 457h1M170 457h1M186 457h2M352 457h1M411 457h2M457 457h1M464 457h1M478 457h1M535 457h1M64 458h1M118 458h1M121 458h1M142 458h1M169 458h1M188 458h1M351 458h1M410 458h1M456 458h1M465 458h1M477 458h1M534 458h1M65 459h1M117 459h1M122 459h1M143 459h1M169 459h1M189 459h2M408 459h2M455 459h1M466 459h1M476 459h1M533 459h1M65 460h1M116 460h1M123 460h1M144 460h1M168 460h1M191 460h1M407 460h1M454 460h1M467 460h1M475 460h1M533 460h1M66 461h1M114 461h2M124 461h1M144 461h2M167 461h1M192 461h2M405 461h2M453 461h1M468 461h1M474 461h1M532 461h1M67 462h1M113 462h1M125 462h1M143 462h1M146 462h1M166 462h1M194 462h2M403 462h2M452 462h1M469 462h1M473 462h1M531 462h1M67 463h1M112 463h1M125 463h1M142 463h1M147 463h1M165 463h1M196 463h1M402 463h1M451 463h1M470 463h1M473 463h1M531 463h1M68 464h1M111 464h1M126 464h1M141 464h1M148 464h1M165 464h1M197 464h2M400 464h2M450 464h1M471 464h2M530 464h1M68 465h1M110 465h1M127 465h1M140 465h1M149 465h1M164 465h1M199 465h1M399 465h1M449 465h1M471 465h1M530 465h1M69 466h1M109 466h1M128 466h1M139 466h1M150 466h1M163 466h1M200 466h2M397 466h2M448 466h1M470 466h1M529 466h1M70 467h1M108 467h1M129 467h1M138 467h1M151 467h1M162 467h1M202 467h1M395 467h2M446 467h2M469 467h1M528 467h1M71 468h1M106 468h2M130 468h1M137 468h1M152 468h2M161 468h1M203 468h2M393 468h2M445 468h1M447 468h1M468 468h1M527 468h1M71 469h1M105 469h1M131 469h1M136 469h1M154 469h1M160 469h1M205 469h2M391 469h2M444 469h1M448 469h1M467 469h1M527 469h1M72 470h1M104 470h1M132 470h1M135 470h1M155 470h1M160 470h1M207 470h2M389 470h2M443 470h1M449 470h1M466 470h1M526 470h1M73 471h1M103 471h1M133 471h2M156 471h1M159 471h1M209 471h2M387 471h2M442 471h1M450 471h1M465 471h1M525 471h1M74 472h1M102 472h1M134 472h1M157 472h2M211 472h2M385 472h2M440 472h2M451 472h1M464 472h1M524 472h1M74 473h1M101 473h1M135 473h1M158 473h2M213 473h2M383 473h1M439 473h1M452 473h1M462 473h2M524 473h1M75 474h1M100 474h1M136 474h2M159 474h2M215 474h2M381 474h2M384 474h1M438 474h1M452 474h1M461 474h1M523 474h1M76 475h1M98 475h2M138 475h1M158 475h1M161 475h1M217 475h2M379 475h2M385 475h1M437 475h1M453 475h1M460 475h1M522 475h1M77 476h1M97 476h1M139 476h1M157 476h1M162 476h2M219 476h3M377 476h2M385 476h1M435 476h2M454 476h1M459 476h1M521 476h1M78 477h1M96 477h1M140 477h1M157 477h1M164 477h1M222 477h2M375 477h2M386 477h1M434 477h1M455 477h1M458 477h1M520 477h1M79 478h1M95 478h1M141 478h1M156 478h1M165 478h1M224 478h2M373 478h2M386 478h1M433 478h1M456 478h2M519 478h1M80 479h1M94 479h1M142 479h2M155 479h1M166 479h2M226 479h3M370 479h3M387 479h1M431 479h2M455 479h3M518 479h1M81 480h1M93 480h1M144 480h1M154 480h1M168 480h1M229 480h3M367 480h3M387 480h1M430 480h1M432 480h1M454 480h1M458 480h1M517 480h1M82 481h1M92 481h1M145 481h1M153 481h1M169 481h1M232 481h3M364 481h3M388 481h1M429 481h1M433 481h1M453 481h1M459 481h1M516 481h1M83 482h1M90 482h2M146 482h1M152 482h1M170 482h1M235 482h3M361 482h3M388 482h1M427 482h2M433 482h1M452 482h1M460 482h1M515 482h1M84 483h1M89 483h1M147 483h1M152 483h1M171 483h2M238 483h3M358 483h3M389 483h1M426 483h1M434 483h1M451 483h1M461 483h1M514 483h1M84 484h1M88 484h1M148 484h1M151 484h1M173 484h1M241 484h4M354 484h4M389 484h1M425 484h1M435 484h1M449 484h2M461 484h1M514 484h1M85 485h1M87 485h1M149 485h2M174 485h1M245 485h3M351 485h3M390 485h1M424 485h1M436 485h1M448 485h1M462 485h1M513 485h1M86 486h1M151 486h1M175 486h2M248 486h3M348 486h3M390 486h1M422 486h2M436 486h1M447 486h1M463 486h1M512 486h1M87 487h1M152 487h1M174 487h1M177 487h2M251 487h3M345 487h3M391 487h1M420 487h2M437 487h1M446 487h1M464 487h1M511 487h1M87 488h1M153 488h2M174 488h1M179 488h2M254 488h4M341 488h4M391 488h1M418 488h2M438 488h1M444 488h2M465 488h1M511 488h1M88 489h1M155 489h1M173 489h1M181 489h1M258 489h5M336 489h5M392 489h1M417 489h1M439 489h1M443 489h1M466 489h1M510 489h1M89 490h1M156 490h1M172 490h1M182 490h2M263 490h6M329 490h7M392 490h1M415 490h2M439 490h1M442 490h1M467 490h1M509 490h1M90 491h1M157 491h2M171 491h1M184 491h1M269 491h7M323 491h6M393 491h1M414 491h1M416 491h1M440 491h2M468 491h1M508 491h1M91 492h1M159 492h1M171 492h1M185 492h2M272 492h1M276 492h7M316 492h7M393 492h1M412 492h2M417 492h1M439 492h1M468 492h1M507 492h1M92 493h1M160 493h2M170 493h1M187 493h1M272 493h1M283 493h33M394 493h1M411 493h1M417 493h1M437 493h2M469 493h1M506 493h1M93 494h1M162 494h1M169 494h1M188 494h2M272 494h1M394 494h1M409 494h2M418 494h1M436 494h1M470 494h1M505 494h1M94 495h1M163 495h1M168 495h1M190 495h2M272 495h1M395 495h1M407 495h2M418 495h1M435 495h1M471 495h1M504 495h1M95 496h1M164 496h2M168 496h1M191 496h3M271 496h1M395 496h1M405 496h2M419 496h1M433 496h2M472 496h1M503 496h1M96 497h1M166 497h2M190 497h1M194 497h2M271 497h1M396 497h1M403 497h2M420 497h1M432 497h1M473 497h1M502 497h1M97 498h1M167 498h2M190 498h1M196 498h2M271 498h1M396 498h1M401 498h2M420 498h1M430 498h2M474 498h1M501 498h1M98 499h1M169 499h1M189 499h1M198 499h2M271 499h1M397 499h1M399 499h2M421 499h1M429 499h1M475 499h1M500 499h1M99 500h1M170 500h1M189 500h1M200 500h2M271 500h1M397 500h2M421 500h1M428 500h1M475 500h1M499 500h1M100 501h1M171 501h2M188 501h1M202 501h2M271 501h1M395 501h2M398 501h1M422 501h1M426 501h2M476 501h1M498 501h1M101 502h1M173 502h1M188 502h1M204 502h2M271 502h1M393 502h2M399 502h1M422 502h1M425 502h1M477 502h1M497 502h1M102 503h1M174 503h2M187 503h1M206 503h2M270 503h1M391 503h2M399 503h1M423 503h2M478 503h1M496 503h1M103 504h1M176 504h2M187 504h1M208 504h2M270 504h1M389 504h2M400 504h1M421 504h2M479 504h1M495 504h1M104 505h1M178 505h2M186 505h1M209 505h3M270 505h1M387 505h2M400 505h1M419 505h2M480 505h1M494 505h1M105 506h1M180 506h1M186 506h1M209 506h1M212 506h2M270 506h1M385 506h2M401 506h1M418 506h1M481 506h1M493 506h1M106 507h1M181 507h2M185 507h1M208 507h1M214 507h3M270 507h1M381 507h4M401 507h1M416 507h2M482 507h1M492 507h1M107 508h1M183 508h3M208 508h1M217 508h4M270 508h1M377 508h4M402 508h1M414 508h2M482 508h1M491 508h1M108 509h1M185 509h2M207 509h1M221 509h4M270 509h1M374 509h3M380 509h1M402 509h1M412 509h2M483 509h1M490 509h1M109 510h1M187 510h1M207 510h1M225 510h2M269 510h1M372 510h2M381 510h1M403 510h1M410 510h2M484 510h1M489 510h1M110 511h1M188 511h2M206 511h1M227 511h2M269 511h1M370 511h2M381 511h1M403 511h1M408 511h2M485 511h1M487 511h2M111 512h2M190 512h2M206 512h1M227 512h1M229 512h3M269 512h1M366 512h4M382 512h1M404 512h1M406 512h2M486 512h1M113 513h1M192 513h2M206 513h1M227 513h1M232 513h4M269 513h1M362 513h4M382 513h1M404 513h2M485 513h1M114 514h1M194 514h3M205 514h1M226 514h1M236 514h4M269 514h1M359 514h3M382 514h1M402 514h2M483 514h2M115 515h2M197 515h2M205 515h1M226 515h1M240 515h4M269 515h1M355 515h4M362 515h1M383 515h1M400 515h2M482 515h1M117 516h1M199 516h2M204 516h1M226 516h1M244 516h3M269 516h1M351 516h4M362 516h1M383 516h1M398 516h2M481 516h1M118 517h1M201 517h2M204 517h1M225 517h1M246 517h5M268 517h1M347 517h4M363 517h1M383 517h1M395 517h3M480 517h1M119 518h1M203 518h2M225 518h1M246 518h1M251 518h4M268 518h1M343 518h4M363 518h1M384 518h1M393 518h2M479 518h1M120 519h1M205 519h2M225 519h1M246 519h1M255 519h4M268 519h1M339 519h5M363 519h1M384 519h1M391 519h2M478 519h1M121 520h1M207 520h2M225 520h1M245 520h1M259 520h6M268 520h1M334 520h5M343 520h1M364 520h1M385 520h1M389 520h2M477 520h1M122 521h1M209 521h3M224 521h1M245 521h1M265 521h7M326 521h8M343 521h1M364 521h1M385 521h1M387 521h2M476 521h1M123 522h1M212 522h2M224 522h1M245 522h1M265 522h1M272 522h16M310 522h16M343 522h1M364 522h1M384 522h3M475 522h1M124 523h1M214 523h3M224 523h1M245 523h1M265 523h1M285 523h1M288 523h22M323 523h1M344 523h1M364 523h1M382 523h2M474 523h1M125 524h1M217 524h3M223 524h1M244 524h1M265 524h1M285 524h1M304 524h1M323 524h1M344 524h1M365 524h1M379 524h3M472 524h2M126 525h2M220 525h4M244 525h1M264 525h1M285 525h1M304 525h1M323 525h1M344 525h1M365 525h1M375 525h4M471 525h1M128 526h1M223 526h4M244 526h1M264 526h1M285 526h1M304 526h1M324 526h1M344 526h1M365 526h1M372 526h3M470 526h1M129 527h1M223 527h1M227 527h2M244 527h1M264 527h1M285 527h1M304 527h1M324 527h1M344 527h1M366 527h1M369 527h3M468 527h2M130 528h2M222 528h1M229 528h3M244 528h1M264 528h1M285 528h1M304 528h1M324 528h1M344 528h1M366 528h3M467 528h1M132 529h1M222 529h1M232 529h4M243 529h1M264 529h1M285 529h1M304 529h1M324 529h1M344 529h1M363 529h4M466 529h1M133 530h2M222 530h1M236 530h4M243 530h1M264 530h1M284 530h1M304 530h1M324 530h1M345 530h1M359 530h4M464 530h2M135 531h1M221 531h1M240 531h4M264 531h1M284 531h1M304 531h1M324 531h1M345 531h1M354 531h5M462 531h2M136 532h2M221 532h1M244 532h4M263 532h1M284 532h1M304 532h1M324 532h1M345 532h1M350 532h4M461 532h1M138 533h2M221 533h1M248 533h6M263 533h1M284 533h1M304 533h1M325 533h1M344 533h6M459 533h2M140 534h1M220 534h1M254 534h6M263 534h1M284 534h1M304 534h1M325 534h1M338 534h6M346 534h1M458 534h1M141 535h2M220 535h1M260 535h4M284 535h1M304 535h1M325 535h1M334 535h4M346 535h1M456 535h2M143 536h1M220 536h1M264 536h6M284 536h1M304 536h1M325 536h1M328 536h6M346 536h1M455 536h1M144 537h2M219 537h1M270 537h17M304 537h1M311 537h17M347 537h1M453 537h2M146 538h1M219 538h1M287 538h24M347 538h1M452 538h1M147 539h2M219 539h1M347 539h1M450 539h2M149 540h1M218 540h1M347 540h1M449 540h1M150 541h2M218 541h1M347 541h1M447 541h2M152 542h1M218 542h1M347 542h1M445 542h2M153 543h2M217 543h1M348 543h1M444 543h1M155 544h2M217 544h1M348 544h1M442 544h2M157 545h1M217 545h1M348 545h1M441 545h1M158 546h2M216 546h1M348 546h1M439 546h2M160 547h2M216 547h1M348 547h1M437 547h2M162 548h2M215 548h1M349 548h1M435 548h2M164 549h2M215 549h1M349 549h1M433 549h2M166 550h2M215 550h1M349 550h1M431 550h2M168 551h2M214 551h1M349 551h1M429 551h2M170 552h2M214 552h1M349 552h1M427 552h2M172 553h2M214 553h1M350 553h1M425 553h2M174 554h3M213 554h1M350 554h1M422 554h3M177 555h2M213 555h1M350 555h1M420 555h2M179 556h2M213 556h1M350 556h1M418 556h2M181 557h2M212 557h1M350 557h1M416 557h2M183 558h3M212 558h1M350 558h1M413 558h3M186 559h2M212 559h1M351 559h1M411 559h2M188 560h2M211 560h1M351 560h1M409 560h2M190 561h2M211 561h1M351 561h1M407 561h2M192 562h3M211 562h1M351 562h1M404 562h3M195 563h2M210 563h1M351 563h1M402 563h2M197 564h2M210 564h1M352 564h1M400 564h2M199 565h2M210 565h1M352 565h1M398 565h2M201 566h3M209 566h1M352 566h1M395 566h3M204 567h3M209 567h1M352 567h1M391 567h4M207 568h4M352 568h1M388 568h3M211 569h3M353 569h1M385 569h3M214 570h3M353 570h1M382 570h3M217 571h3M353 571h1M379 571h3M220 572h3M353 572h1M376 572h3M223 573h3M353 573h1M372 573h4M226 574h4M353 574h1M369 574h3M230 575h4M354 575h1M365 575h4M234 576h4M354 576h1M361 576h4M238 577h5M354 577h1M356 577h5M243 578h5M351 578h5M248 579h7M343 579h8M255 580h10M333 580h10M265 581h10M323 581h10M275 582h10M313 582h10M285 583h28"/>
<path stroke="#ff0000" d="M309 29h3M319 29h3M308 30h1M312 30h1M318 30h1M322 30h1M307 31h1M313 31h1M317 31h1M323 31h1M307 32h1M313 32h1M317 32h1M323 32h1M307 33h1M313 33h1M317 33h1M323 33h1M308 34h1M314 34h1M316 34h1M322 34h1M309 35h1M314 35h1M316 35h1M321 35h1M314 36h1M316 36h1M314 37h1M316 37h1M315 38h1M315 39h1M315 40h1M315 41h1M315 42h1M315 43h1M315 44h1M315 45h1M747 107h3M745 108h2M750 108h2M744 109h1M749 109h1M752 109h1M745 110h2M749 110h1M752 110h1M744 111h1M747 111h1M750 111h2M317 112h1M744 112h1M747 112h1M752 112h1M316 113h1M745 113h2M750 113h2M306 114h2M315 114h1M747 114h3M308 115h1M315 115h1M309 116h1M315 116h1M309 117h1M315 117h1M309 118h1M315 118h1M308 119h1M315 119h1M308 120h1M315 120h1M307 121h1M315 121h1M307 122h1M315 122h1M306 123h1M315 123h1M306 124h1M315 124h1M305 125h1M315 125h1M305 126h15M315 127h1M315 128h1M744 146h1M746 146h1M748 146h1M745 147h1M747 147h1M749 147h1M745 148h1M747 148h1M749 148h1M745 149h1M747 149h1M749 149h1M745 150h1M747 150h1M749 150h1M319 151h1M745 151h1M747 151h1M749 151h1M745 152h1M747 152h1M749 152h1M752 152h1M745 153h1M747 153h1M749 153h1M752 153h1M750 154h2M744 186h1M752 186h1M745 187h1M751 187h1M746 188h1M750 188h1M746 189h1M750 189h1M744 190h9M746 191h1M750 191h1M746 192h1M750 192h1M745 193h1M751 193h1M744 194h1M752 194h1M426 232h1M426 233h1M425 234h1M425 235h1M425 236h1M747 236h3M424 237h1M745 237h2M750 237h2M424 238h1M745 238h1M751 238h1M424 239h1M744 239h1M752 239h1M423 240h1M744 240h1M748 240h1M752 240h1M423 241h1M744 241h1M752 241h1M423 242h1M745 242h1M751 242h1M422 243h1M745 243h2M750 243h2M422 244h1M747 244h3M422 245h1M421 246h1M421 247h1M421 248h1M420 249h2M420 250h1M420 251h1M419 252h2M419 253h1M419 254h1M418 255h2M418 256h1M417 257h2M417 258h2M417 259h1M417 260h1M416 261h2M416 262h1M415 263h2M415 264h2M415 265h1M415 266h1M414 267h2M414 268h1M413 269h2M413 270h2M413 271h1M413 272h1M412 273h2M412 274h1M411 275h2M411 276h2M750 276h3M411 277h1M751 277h2M411 278h1M750 278h1M752 278h1M410 279h2M746 279h2M749 279h1M410 280h1M745 280h1M748 280h1M409 281h2M744 281h1M749 281h1M409 282h2M744 282h1M749 282h1M409 283h2M745 283h1M748 283h1M409 284h1M746 284h2M408 285h2M408 286h2M751 286h1M407 287h2M745 287h2M750 287h1M407 288h2M747 288h1M750 288h1M407 289h2M747 289h1M750 289h1M407 290h1M746 290h1M750 290h1M406 291h2M746 291h1M750 291h1M406 292h2M745 292h1M750 292h1M405 293h2M745 293h8M405 294h2M750 294h1M405 295h2M405 296h1M404 297h2M404 298h2M149 299h1M403 299h2M403 300h2M403 301h2M403 302h1M402 303h2M402 304h2M401 305h2M401 306h2M400 307h1M402 307h1M401 308h1M400 309h2M400 310h2M399 311h2M399 312h2M398 313h1M400 313h1M399 314h2M398 315h2M398 316h2M397 317h1M399 317h1M397 318h2M396 319h1M398 319h1M397 320h2M396 321h2M396 322h2M395 323h1M397 323h1M395 324h2M394 325h1M396 325h1M395 326h2M394 327h2M394 328h2M393 329h1M395 329h1M393 330h2M392 331h1M394 331h1M393 332h2M392 333h2M392 334h2M391 335h1M393 335h1M392 336h1M390 337h1M392 337h1M391 338h2M390 339h2M390 340h2M389 341h1M391 341h1M390 342h1M388 343h1M389 344h2M388 345h2M388 346h2M387 347h1M389 347h1M388 348h2M386 349h1M388 349h1M387 350h2M386 351h1M388 351h1M386 352h2M385 353h1M387 353h1M386 354h2M384 355h1M386 355h1M385 356h2M383 357h1M386 357h1M384 358h2M383 359h1M385 359h1M384 360h2M382 361h1M384 361h1M383 362h2M381 363h1M384 363h1M382 364h2M381 365h1M383 365h1M382 366h2M380 367h1M382 367h1M381 368h2M379 369h1M382 369h1M380 370h2M379 371h1M381 371h1M380 372h2M378 373h1M380 373h1M379 374h2M377 375h1M380 375h1M378 376h2M377 377h1M379 377h1M378 378h2M376 379h1M379 379h1M377 380h2M375 381h1M378 381h1M376 382h1M378 382h1M375 383h1M377 383h1M376 384h2M374 385h1M377 385h1M375 386h2M373 387h1M376 387h1M374 388h1M376 388h1M373 389h1M375 389h1M374 390h2M372 391h1M375 391h1M404 391h5M373 392h2M394 392h10M371 393h1M374 393h1M383 393h12M397 393h1M372 394h11M385 394h1M388 394h1M362 395h10M373 395h1M376 395h1M379 395h1M382 395h1M413 395h1M351 396h11M370 396h1M372 396h2M341 397h10M361 397h1M364 397h1M367 397h1M370 397h1M373 397h1M330 398h11M355 398h1M358 398h1M371 398h2M320 399h10M349 399h1M352 399h1M369 399h1M372 399h1M309 400h11M340 400h1M343 400h1M346 400h1M370 400h1M372 400h1M298 401h11M334 401h1M337 401h1M369 401h1M371 401h1M288 402h10M325 402h1M328 402h1M331 402h1M370 402h2M277 403h11M319 403h1M322 403h1M368 403h1M371 403h1M267 404h10M310 404h1M313 404h1M316 404h1M369 404h2M256 405h11M304 405h1M307 405h1M367 405h1M370 405h1M246 406h10M295 406h1M298 406h1M301 406h1M368 406h1M370 406h1M62 407h5M235 407h11M289 407h1M292 407h1M366 407h1M369 407h1M439 407h6M61 408h1M67 408h1M224 408h11M280 408h1M283 408h1M286 408h1M368 408h2M443 408h2M60 409h1M68 409h1M214 409h10M274 409h1M277 409h1M366 409h1M369 409h1M442 409h1M444 409h1M59 410h1M69 410h1M210 410h1M212 410h2M265 410h1M268 410h1M271 410h1M367 410h2M441 410h1M444 410h1M58 411h1M70 411h1M259 411h1M262 411h1M365 411h1M368 411h1M440 411h1M444 411h1M58 412h1M70 412h1M253 412h1M256 412h1M366 412h1M368 412h1M439 412h1M444 412h1M58 413h1M70 413h1M244 413h1M247 413h1M250 413h1M364 413h1M368 413h1M431 413h5M438 413h1M58 414h1M70 414h1M366 414h2M430 414h1M436 414h2M58 415h1M70 415h1M229 415h1M232 415h1M235 415h1M364 415h1M367 415h1M429 415h1M437 415h1M59 416h1M69 416h1M223 416h1M226 416h1M365 416h1M367 416h1M428 416h1M438 416h1M60 417h1M68 417h1M363 417h1M366 417h1M428 417h1M438 417h1M60 418h1M68 418h1M364 418h1M366 418h1M428 418h1M438 418h1M56 419h1M60 419h1M68 419h1M362 419h1M366 419h1M428 419h1M438 419h1M57 420h1M59 420h1M69 420h1M364 420h2M428 420h1M438 420h1M58 421h1M70 421h1M362 421h1M365 421h1M429 421h1M437 421h1M71 422h1M363 422h1M365 422h1M430 422h1M436 422h1M72 423h1M361 423h1M364 423h1M431 423h5M362 424h1M364 424h1M360 425h1M364 425h1M362 426h2M361 435h1M521 436h5M524 437h2M523 438h1M525 438h1M522 439h1M525 439h1M521 440h1M525 440h1M520 441h1M511 442h1M519 442h1M512 443h1M518 443h1M513 444h1M517 444h1M514 445h1M516 445h1M515 446h1M514 447h1M516 447h1M513 448h1M517 448h1M512 449h1M518 449h1M511 450h1M519 450h1M510 451h1M509 452h1M353 462h5M351 463h2M358 463h2M350 464h1M360 464h1M349 465h1M361 465h1M348 466h1M362 466h1M348 467h1M362 467h1M347 468h1M363 468h1M347 469h1M363 469h1M347 470h1M355 470h1M363 470h1M347 471h1M363 471h1M347 472h1M363 472h1M348 473h1M362 473h1M348 474h1M362 474h1M349 475h1M361 475h1M350 476h1M360 476h1M351 477h2M358 477h2M353 478h5"/>
<path stroke="#ffff00" d="M177 56h1M189 56h1M178 57h1M188 57h1M178 58h1M188 58h1M179 59h2M186 59h2M181 60h5M179 61h2M186 61h2M178 62h1M188 62h1M178 63h1M188 63h1M177 64h1M189 64h1M177 65h1M189 65h1M177 66h1M189 66h1M177 67h1M189 67h1M177 68h1M189 68h1M178 69h1M188 69h1M178 70h1M188 70h1M179 71h2M186 71h2M181 72h5M747 116h3M746 117h1M750 117h1M745 118h1M751 118h1M745 119h1M751 119h1M745 120h1M751 120h1M746 121h1M750 121h1M744 122h1M746 122h1M750 122h1M745 123h1M751 123h1M752 124h1M320 151h1M750 156h3M751 157h2M750 158h1M752 158h1M745 159h1M749 159h1M746 160h1M748 160h1M747 161h1M746 162h1M748 162h1M745 163h1M749 163h1M744 164h1M745 196h2M750 196h2M744 197h1M747 197h1M749 197h1M752 197h1M744 198h1M747 198h1M749 198h1M752 198h1M745 199h1M747 199h1M749 199h1M751 199h1M748 200h1M748 201h1M748 202h1M748 203h1M748 204h1M456 207h1M456 208h1M452 209h9M456 210h1M456 211h1M456 212h1M456 213h1M460 213h3M456 214h1M459 214h1M463 214h1M456 215h3M464 215h1M456 216h1M464 216h1M456 217h1M464 217h1M456 218h1M463 218h1M456 219h1M462 219h1M456 220h1M462 220h1M456 221h1M462 221h1M463 222h1M464 223h1M431 229h1M747 296h1M745 297h5M747 298h1M747 299h1M749 299h2M747 300h2M751 300h1M155 301h1M747 301h1M751 301h1M747 302h1M750 302h1M156 303h1M747 303h1M750 303h1M751 304h1M156 305h1M555 307h1M561 307h1M565 307h3M554 308h2M561 308h2M564 308h1M568 308h1M553 309h1M555 309h1M561 309h1M563 309h1M569 309h1M555 310h1M560 310h1M562 310h1M569 310h1M555 311h1M559 311h1M563 311h1M569 311h1M555 312h1M559 312h1M564 312h1M568 312h1M555 313h1M559 313h1M565 313h3M555 314h1M559 314h1M566 314h1M555 315h1M559 315h1M567 315h1M556 316h1M558 316h1M568 316h1M557 317h1M569 317h1M557 318h1M569 318h1M557 319h1M569 319h1M557 320h1M569 320h1M557 321h1M569 321h1M568 322h1M567 323h1M211 412h1M214 415h1M362 427h2M360 428h2M146 509h1M150 509h1M154 509h1M147 510h1M149 510h1M151 510h1M153 510h1M155 510h1M148 511h1M152 511h1M156 511h1M160 511h1M148 512h1M152 512h1M156 512h1M159 512h2M148 513h1M152 513h1M156 513h1M158 513h1M160 513h1M148 514h1M152 514h1M156 514h2M160 514h1M148 515h1M152 515h1M156 515h1M160 515h1M148 516h1M152 516h1M156 516h1M160 516h1M148 517h1M152 517h1M156 517h1M160 517h1M148 518h1M152 518h1M156 518h1M160 518h1M148 519h1M152 519h1M156 519h1M160 519h1M148 520h1M152 520h1M156 520h1M160 520h1M148 521h1M152 521h1M156 521h1M160 521h1M148 522h1M152 522h1M157 522h1M159 522h1M148 523h1M152 523h1M158 523h1M157 524h1M159 524h1M156 525h1M160 525h1"/>
<path stroke="#7f7f7f" d="M290 61h1M298 61h1M301 61h1M306 61h1M310 61h1M277 62h1M282 62h1M286 62h1M290 62h1M298 62h1M301 62h1M306 62h1M310 62h1M318 62h1M322 62h1M326 62h1M265 63h1M269 63h1M277 63h1M282 63h1M286 63h1M290 63h1M298 63h1M301 63h1M306 63h1M310 63h1M318 63h1M322 63h1M326 63h1M330 63h1M261 64h1M265 64h1M269 64h1M277 64h1M282 64h1M286 64h1M290 64h1M298 64h1M301 64h1M306 64h1M310 64h1M318 64h1M322 64h1M326 64h1M330 64h1M257 65h1M261 65h1M265 65h1M269 65h1M277 65h1M282 65h1M286 65h1M290 65h1M298 65h1M301 65h1M306 65h1M310 65h1M318 65h1M322 65h1M326 65h1M330 65h1M339 65h1M343 65h1M249 66h1M257 66h1M261 66h1M265 66h1M270 66h1M278 66h1M282 66h1M286 66h1M290 66h1M298 66h1M301 66h1M306 66h1M310 66h1M318 66h1M322 66h1M326 66h1M330 66h1M339 66h1M343 66h1M347 66h1M244 67h1M249 67h1M257 67h1M261 67h1M266 67h1M270 67h1M278 67h1M282 67h1M286 67h1M290 67h1M298 67h1M301 67h1M306 67h1M310 67h1M318 67h1M322 67h1M326 67h1M330 67h1M338 67h1M343 67h1M347 67h1M351 67h1M240 68h1M244 68h1M249 68h1M258 68h1M262 68h1M266 68h1M270 68h1M278 68h1M283 68h1M286 68h1M290 68h1M298 68h1M301 68h1M305 68h1M309 68h1M317 68h1M322 68h1M326 68h1M330 68h1M338 68h1M342 68h1M346 68h1M351 68h1M236 69h1M240 69h1M245 69h1M249 69h1M258 69h1M262 69h1M266 69h1M270 69h1M278 69h1M283 69h1M286 69h1M290 69h1M298 69h1M301 69h1M305 69h1M309 69h1M317 69h1M321 69h1M325 69h1M330 69h1M338 69h1M342 69h1M346 69h1M350 69h1M359 69h1M236 70h1M241 70h1M245 70h1M250 70h1M258 70h1M262 70h1M266 70h1M270 70h1M278 70h1M283 70h1M286 70h1M290 70h1M298 70h1M301 70h1M305 70h1M309 70h1M317 70h1M321 70h1M325 70h1M329 70h1M338 70h1M342 70h1M346 70h1M350 70h1M359 70h1M363 70h1M237 71h1M241 71h1M245 71h1M250 71h1M258 71h1M262 71h1M266 71h1M270 71h1M278 71h1M283 71h1M286 71h1M290 71h1M298 71h1M301 71h1M305 71h1M309 71h1M317 71h1M321 71h1M325 71h1M329 71h1M337 71h1M342 71h1M346 71h1M350 71h1M358 71h1M362 71h1M367 71h1M228 72h1M237 72h1M241 72h1M246 72h1M250 72h1M258 72h1M262 72h1M266 72h1M270 72h1M279 72h1M283 72h1M286 72h1M290 72h1M298 72h1M301 72h1M305 72h1M309 72h1M317 72h1M321 72h1M325 72h1M329 72h1M337 72h1M341 72h1M345 72h1M350 72h1M358 72h1M362 72h1M367 72h1M371 72h1M224 73h1M229 73h1M237 73h1M242 73h1M246 73h1M250 73h1M258 73h1M262 73h1M266 73h1M271 73h1M279 73h1M283 73h1M286 73h1M290 73h1M298 73h1M301 73h1M305 73h1M309 73h1M317 73h1M321 73h1M325 73h1M329 73h1M337 73h1M341 73h1M345 73h1M349 73h1M358 73h1M362 73h1M366 73h1M371 73h1M220 74h1M224 74h1M229 74h1M238 74h1M242 74h1M246 74h1M250 74h1M258 74h1M263 74h1M267 74h1M271 74h1M279 74h1M283 74h1M286 74h1M290 74h1M298 74h1M301 74h1M305 74h1M309 74h1M317 74h1M321 74h1M325 74h1M329 74h1M337 74h1M341 74h1M345 74h1M349 74h1M358 74h1M362 74h1M366 74h1M370 74h1M217 75h1M220 75h1M225 75h1M229 75h1M238 75h1M242 75h1M246 75h1M250 75h1M259 75h1M263 75h1M267 75h1M271 75h1M279 75h1M283 75h1M286 75h1M317 75h1M321 75h1M325 75h1M329 75h1M336 75h1M341 75h1M345 75h1M349 75h1M357 75h1M361 75h1M366 75h1M370 75h1M379 75h1M217 76h1M221 76h1M225 76h1M230 76h1M238 76h1M242 76h1M247 76h1M251 76h1M259 76h1M263 76h1M267 76h1M271 76h1M329 76h1M336 76h1M340 76h1M345 76h1M349 76h1M357 76h1M361 76h1M365 76h1M370 76h1M379 76h1M383 76h1M218 77h1M221 77h1M226 77h1M230 77h1M238 77h1M243 77h1M247 77h1M251 77h1M259 77h1M263 77h1M336 77h1M340 77h1M344 77h1M349 77h1M357 77h1M361 77h1M365 77h1M369 77h1M378 77h1M383 77h1M209 78h1M218 78h1M222 78h1M226 78h1M230 78h1M239 78h1M243 78h1M247 78h1M251 78h1M340 78h1M344 78h1M348 78h1M357 78h1M360 78h1M365 78h1M369 78h1M378 78h1M382 78h1M387 78h1M209 79h1M218 79h1M222 79h1M226 79h1M230 79h1M239 79h1M243 79h1M248 79h1M251 79h1M344 79h1M348 79h1M357 79h1M360 79h1M365 79h1M369 79h1M377 79h1M382 79h1M386 79h1M205 80h1M210 80h1M219 80h1M222 80h1M227 80h1M231 80h1M239 80h1M244 80h1M248 80h1M348 80h1M356 80h1M360 80h1M364 80h1M369 80h1M377 80h1M381 80h1M386 80h1M391 80h1M205 81h1M210 81h1M219 81h1M223 81h1M227 81h1M231 81h1M240 81h1M244 81h1M356 81h1M360 81h1M364 81h1M368 81h1M376 81h1M381 81h1M385 81h1M390 81h1M201 82h1M206 82h1M211 82h1M219 82h1M223 82h1M227 82h1M231 82h1M240 82h1M356 82h1M359 82h1M364 82h1M368 82h1M376 82h1M381 82h1M385 82h1M390 82h1M202 83h1M206 83h1M211 83h1M219 83h1M223 83h1M228 83h1M232 83h1M359 83h1M363 83h1M368 83h1M376 83h1M380 83h1M385 83h1M389 83h1M398 83h1M197 84h1M202 84h1M207 84h1M211 84h1M220 84h1M224 84h1M228 84h1M232 84h1M363 84h1M367 84h1M375 84h1M380 84h1M384 84h1M389 84h1M397 84h1M198 85h1M203 85h1M207 85h1M212 85h1M220 85h1M224 85h1M229 85h1M367 85h1M375 85h1M380 85h1M384 85h1M388 85h1M397 85h1M401 85h1M198 86h1M203 86h1M207 86h1M212 86h1M220 86h1M225 86h1M374 86h1M379 86h1M384 86h1M388 86h1M396 86h1M401 86h1M190 87h1M199 87h1M204 87h1M208 87h1M212 87h1M221 87h1M225 87h1M374 87h1M379 87h1M383 87h1M387 87h1M396 87h1M400 87h1M405 87h1M191 88h1M199 88h1M204 88h1M208 88h1M213 88h1M221 88h1M378 88h1M383 88h1M387 88h1M396 88h1M400 88h1M405 88h1M191 89h1M200 89h1M205 89h1M208 89h1M213 89h1M378 89h1M382 89h1M386 89h1M395 89h1M399 89h1M404 89h1M409 89h1M187 90h1M192 90h1M200 90h1M205 90h1M209 90h1M214 90h1M382 90h1M386 90h1M395 90h1M399 90h1M404 90h1M409 90h1M187 91h1M192 91h1M201 91h1M206 91h1M209 91h1M385 91h1M395 91h1M398 91h1M403 91h1M408 91h1M183 92h1M188 92h1M193 92h1M201 92h1M206 92h1M210 92h1M394 92h1M398 92h1M403 92h1M408 92h1M417 92h1M183 93h1M188 93h1M193 93h1M202 93h1M207 93h1M394 93h1M397 93h1M402 93h1M407 93h1M416 93h1M180 94h1M184 94h1M189 94h1M194 94h1M202 94h1M207 94h1M393 94h1M397 94h1M402 94h1M406 94h1M416 94h1M420 94h1M180 95h1M184 95h1M190 95h1M194 95h1M203 95h1M393 95h1M396 95h1M401 95h1M406 95h1M415 95h1M419 95h1M181 96h1M185 96h1M190 96h1M195 96h1M203 96h1M396 96h1M401 96h1M405 96h1M415 96h1M419 96h1M424 96h1M181 97h1M186 97h1M191 97h1M195 97h1M400 97h1M405 97h1M414 97h1M418 97h1M423 97h1M172 98h1M182 98h1M186 98h1M191 98h1M196 98h1M400 98h1M404 98h1M413 98h1M418 98h1M423 98h1M173 99h1M183 99h1M187 99h1M192 99h1M196 99h1M404 99h1M413 99h1M417 99h1M422 99h1M427 99h1M173 100h1M183 100h1M187 100h1M192 100h1M403 100h1M412 100h1M416 100h1M422 100h1M427 100h1M169 101h1M174 101h1M184 101h1M188 101h1M193 101h1M412 101h1M416 101h1M421 101h1M426 101h1M169 102h1M175 102h1M184 102h1M188 102h1M411 102h1M415 102h1M420 102h1M425 102h1M166 103h1M170 103h1M175 103h1M185 103h1M189 103h1M411 103h1M415 103h1M420 103h1M425 103h1M434 103h1M166 104h1M171 104h1M176 104h1M185 104h1M414 104h1M419 104h1M424 104h1M433 104h1M167 105h1M172 105h1M176 105h1M186 105h1M414 105h1M419 105h1M423 105h1M433 105h1M162 106h1M168 106h1M172 106h1M177 106h1M418 106h1M423 106h1M432 106h1M437 106h1M162 107h1M168 107h1M173 107h1M178 107h1M418 107h1M422 107h1M431 107h1M437 107h1M163 108h1M169 108h1M174 108h1M178 108h1M417 108h1M421 108h1M431 108h1M436 108h1M441 108h1M164 109h1M169 109h1M175 109h1M179 109h1M421 109h1M430 109h1M435 109h1M440 109h1M156 110h1M165 110h1M170 110h1M175 110h1M420 110h1M430 110h1M434 110h1M440 110h1M156 111h1M165 111h1M171 111h1M176 111h1M429 111h1M434 111h1M439 111h1M444 111h1M157 112h1M166 112h1M171 112h1M428 112h1M433 112h1M438 112h1M443 112h1M152 113h1M158 113h1M167 113h1M172 113h1M428 113h1M432 113h1M437 113h1M443 113h1M153 114h1M159 114h1M168 114h1M427 114h1M431 114h1M437 114h1M442 114h1M148 115h1M153 115h1M159 115h1M168 115h1M431 115h1M436 115h1M441 115h1M149 116h1M154 116h1M160 116h1M169 116h1M430 116h1M435 116h1M440 116h1M451 116h1M150 117h1M155 117h1M161 117h1M434 117h1M439 117h1M450 117h1M146 118h1M151 118h1M156 118h1M162 118h1M434 118h1M438 118h1M449 118h1M147 119h1M152 119h1M157 119h1M162 119h1M433 119h1M438 119h1M448 119h1M453 119h1M147 120h1M153 120h1M158 120h1M163 120h1M437 120h1M447 120h1M452 120h1M148 121h1M153 121h1M158 121h1M436 121h1M446 121h1M452 121h1M457 121h1M149 122h1M154 122h1M159 122h1M446 122h1M451 122h1M456 122h1M139 123h1M150 123h1M155 123h1M160 123h1M445 123h1M450 123h1M455 123h1M140 124h1M151 124h1M156 124h1M444 124h1M449 124h1M454 124h1M141 125h1M152 125h1M157 125h1M214 125h1M443 125h1M448 125h1M453 125h1M460 125h1M136 126h1M142 126h1M152 126h1M442 126h1M447 126h1M452 126h1M459 126h1M137 127h1M143 127h1M153 127h1M215 127h1M447 127h1M452 127h1M458 127h1M138 128h1M144 128h1M154 128h1M446 128h1M451 128h1M457 128h1M133 129h1M139 129h1M144 129h1M216 129h1M445 129h1M450 129h1M456 129h1M134 130h1M140 130h1M145 130h1M449 130h1M455 130h1M467 130h1M130 131h1M135 131h1M141 131h1M146 131h1M217 131h1M448 131h1M454 131h1M466 131h1M131 132h1M136 132h1M141 132h1M147 132h1M310 132h1M453 132h1M465 132h1M132 133h1M137 133h1M142 133h1M148 133h1M218 133h1M311 133h1M452 133h1M464 133h1M469 133h1M133 134h1M138 134h1M143 134h1M312 134h1M451 134h1M462 134h2M468 134h1M134 135h1M139 135h1M144 135h1M219 135h1M312 135h1M461 135h1M467 135h1M135 136h1M140 136h1M145 136h1M313 136h1M460 136h1M466 136h1M472 136h1M135 137h1M141 137h1M220 137h1M314 137h1M459 137h1M465 137h1M471 137h1M125 138h1M136 138h1M142 138h1M315 138h1M458 138h1M464 138h1M470 138h1M126 139h1M137 139h1M221 139h1M315 139h1M457 139h1M463 139h1M469 139h1M475 139h1M127 140h1M138 140h1M316 140h1M462 140h1M467 140h2M474 140h1M121 141h1M128 141h1M139 141h1M222 141h1M317 141h1M461 141h1M466 141h1M473 141h1M122 142h1M129 142h1M318 142h1M460 142h1M465 142h1M472 142h1M123 143h1M130 143h1M223 143h1M318 143h1M464 143h1M470 143h2M124 144h1M131 144h1M319 144h1M463 144h1M469 144h1M119 145h1M125 145h1M132 145h1M224 145h1M320 145h1M462 145h1M468 145h1M120 146h2M126 146h2M133 146h1M467 146h1M480 146h1M116 147h1M122 147h1M128 147h1M134 147h1M225 147h1M466 147h1M478 147h2M117 148h1M123 148h1M129 148h1M465 148h1M477 148h1M483 148h1M118 149h1M124 149h1M130 149h1M226 149h1M422 149h1M476 149h1M482 149h1M119 150h1M125 150h1M131 150h1M475 150h1M481 150h1M120 151h1M126 151h2M227 151h1M420 151h1M474 151h1M480 151h1M121 152h2M128 152h1M472 152h2M478 152h2M485 152h1M123 153h1M129 153h1M228 153h1M419 153h1M471 153h1M477 153h1M483 153h2M111 154h1M124 154h1M470 154h1M476 154h1M482 154h1M112 155h2M125 155h1M229 155h1M417 155h1M475 155h1M481 155h1M114 156h1M126 156h1M474 156h1M480 156h1M487 156h2M108 157h1M115 157h1M230 157h1M415 157h1M473 157h1M479 157h1M486 157h1M109 158h2M116 158h1M477 158h2M485 158h1M111 159h1M117 159h1M231 159h1M414 159h1M476 159h1M483 159h2M112 160h1M118 160h2M475 160h1M482 160h1M106 161h2M113 161h2M120 161h1M232 161h1M412 161h1M481 161h1M108 162h1M115 162h1M121 162h1M479 162h2M491 162h2M109 163h1M116 163h1M233 163h1M411 163h1M478 163h1M490 163h1M103 164h1M110 164h2M117 164h2M489 164h1M104 165h2M112 165h1M119 165h1M234 165h1M409 165h1M487 165h2M106 166h1M113 166h1M486 166h1M494 166h2M107 167h2M114 167h2M235 167h1M407 167h1M485 167h1M493 167h1M109 168h2M116 168h1M483 168h2M491 168h2M111 169h1M235 169h1M406 169h1M482 169h1M489 169h2M496 169h2M112 170h2M488 170h1M495 170h1M99 171h2M114 171h1M236 171h1M404 171h1M486 171h2M494 171h1M101 172h1M485 172h1M492 172h2M500 172h1M102 173h2M237 173h1M402 173h1M491 173h1M498 173h2M96 174h1M104 174h1M490 174h1M497 174h1M97 175h2M105 175h2M238 175h1M401 175h1M488 175h2M495 175h2M99 176h2M107 176h1M487 176h1M493 176h2M101 177h1M108 177h2M239 177h1M399 177h1M492 177h1M94 178h1M102 178h2M110 178h1M490 178h2M95 179h2M104 179h2M240 179h1M397 179h1M489 179h1M97 180h2M106 180h2M503 180h2M92 181h1M99 181h1M108 181h1M241 181h1M396 181h1M501 181h2M93 182h2M100 182h2M499 182h2M95 183h2M102 183h2M242 183h1M394 183h1M498 183h1M505 183h2M97 184h1M104 184h2M496 184h2M503 184h2M98 185h2M243 185h1M392 185h1M494 185h2M501 185h2M100 186h2M493 186h1M500 186h1M102 187h2M244 187h1M391 187h1M498 187h2M507 187h2M88 188h1M496 188h2M505 188h2M89 189h2M245 189h1M389 189h1M495 189h1M503 189h2M91 190h2M502 190h1M510 190h2M93 191h1M246 191h1M388 191h1M500 191h2M508 191h2M86 192h1M94 192h2M498 192h2M506 192h2M87 193h2M96 193h2M247 193h1M386 193h1M497 193h1M504 193h2M89 194h2M98 194h2M502 194h2M91 195h2M100 195h1M248 195h1M384 195h1M500 195h2M93 196h2M499 196h1M85 197h2M95 197h2M249 197h1M383 197h1M514 197h1M87 198h2M97 198h2M512 198h2M89 199h2M250 199h1M381 199h1M510 199h2M83 200h1M91 200h2M508 200h2M84 201h2M93 201h2M251 201h1M379 201h1M506 201h2M515 201h2M86 202h3M95 202h2M133 202h1M504 202h2M513 202h2M89 203h3M135 203h1M252 203h1M378 203h1M502 203h2M511 203h2M92 204h2M137 204h1M509 204h2M94 205h2M139 205h1M253 205h1M376 205h1M507 205h2M517 205h2M141 206h1M505 206h2M515 206h2M79 207h2M143 207h1M254 207h1M374 207h1M504 207h1M512 207h3M81 208h2M509 208h3M83 209h2M145 209h1M255 209h1M373 209h1M507 209h2M519 209h2M85 210h2M147 210h1M506 210h1M517 210h2M78 211h1M87 211h2M149 211h1M256 211h1M371 211h1M514 211h3M79 212h2M89 212h2M151 212h1M511 212h3M81 213h3M91 213h1M153 213h1M257 213h1M370 213h1M509 213h2M84 214h3M155 214h1M508 214h1M76 215h2M87 215h2M258 215h1M368 215h1M78 216h2M89 216h2M157 216h1M80 217h3M159 217h1M259 217h1M366 217h1M522 217h2M83 218h3M161 218h1M519 218h3M75 219h2M86 219h2M163 219h1M260 219h1M365 219h1M515 219h4M77 220h2M88 220h2M165 220h1M512 220h3M523 220h2M79 221h2M261 221h1M363 221h1M475 221h1M510 221h2M521 221h2M81 222h3M167 222h1M473 222h1M518 222h3M84 223h2M169 223h1M262 223h1M361 223h1M471 223h1M515 223h3M86 224h2M171 224h1M469 224h1M513 224h2M524 224h2M173 225h1M263 225h1M360 225h1M467 225h1M511 225h2M522 225h2M175 226h1M465 226h1M519 226h3M72 227h2M177 227h1M264 227h1M358 227h1M463 227h1M516 227h3M74 228h3M459 228h1M461 228h1M514 228h2M526 228h1M77 229h4M179 229h1M265 229h1M356 229h1M457 229h1M513 229h1M523 229h3M81 230h3M181 230h1M455 230h1M519 230h4M71 231h2M84 231h2M183 231h1M266 231h1M355 231h1M453 231h1M516 231h3M73 232h3M185 232h1M451 232h1M514 232h2M76 233h4M187 233h1M267 233h1M353 233h1M449 233h1M80 234h3M189 234h1M447 234h1M70 235h1M83 235h2M268 235h1M351 235h1M445 235h1M71 236h4M191 236h1M441 236h1M443 236h1M528 236h2M75 237h3M193 237h1M269 237h1M439 237h1M525 237h3M78 238h4M195 238h1M437 238h1M521 238h4M69 239h2M82 239h2M197 239h1M270 239h1M348 239h1M435 239h1M518 239h3M71 240h4M199 240h1M433 240h1M516 240h2M529 240h2M75 241h5M201 241h1M271 241h1M347 241h1M431 241h1M526 241h3M80 242h3M429 242h1M522 242h4M203 243h1M272 243h1M345 243h1M425 243h1M427 243h1M519 243h3M205 244h1M423 244h1M517 244h2M530 244h2M207 245h1M273 245h1M343 245h1M421 245h1M527 245h3M209 246h1M419 246h1M523 246h4M67 247h2M211 247h1M274 247h1M342 247h1M417 247h1M520 247h3M69 248h4M415 248h1M518 248h2M73 249h5M213 249h1M275 249h1M340 249h1M413 249h1M529 249h4M78 250h3M215 250h1M411 250h1M523 250h6M66 251h2M217 251h1M276 251h1M338 251h1M407 251h1M409 251h1M519 251h4M68 252h4M219 252h1M405 252h1M72 253h5M221 253h1M277 253h1M337 253h1M403 253h1M77 254h3M223 254h1M401 254h1M65 255h3M278 255h1M335 255h1M399 255h1M68 256h4M225 256h1M397 256h1M72 257h4M227 257h1M278 257h1M333 257h1M395 257h1M531 257h3M76 258h3M229 258h1M391 258h1M393 258h1M524 258h7M65 259h2M231 259h1M279 259h1M332 259h1M389 259h1M521 259h3M67 260h4M233 260h1M387 260h1M71 261h4M235 261h1M280 261h1M330 261h1M385 261h1M531 261h4M75 262h3M383 262h1M525 262h6M237 263h1M281 263h1M329 263h1M381 263h1M521 263h4M239 264h1M379 264h1M241 265h1M282 265h1M327 265h1M377 265h1M532 265h4M243 266h1M373 266h1M375 266h1M525 266h7M245 267h1M283 267h1M325 267h1M371 267h1M522 267h3M63 268h7M247 268h1M369 268h1M70 269h7M284 269h1M324 269h1M367 269h1M533 269h3M249 270h1M365 270h1M526 270h7M251 271h1M285 271h1M322 271h1M522 271h4M62 272h7M253 272h1M361 272h1M69 273h7M255 273h1M286 273h1M320 273h1M357 273h1M359 273h1M257 274h1M355 274h1M287 275h1M319 275h1M353 275h1M62 276h7M259 276h1M351 276h1M69 277h7M261 277h1M288 277h1M317 277h1M349 277h1M533 277h4M263 278h1M347 278h1M527 278h6M265 279h1M289 279h1M315 279h1M345 279h1M523 279h4M62 280h6M267 280h1M341 280h1M343 280h1M68 281h8M132 281h1M269 281h1M290 281h1M314 281h1M339 281h1M133 282h2M337 282h1M530 282h7M135 283h2M271 283h1M291 283h1M312 283h1M335 283h1M523 283h7M137 284h1M273 284h1M333 284h1M138 285h2M275 285h1M292 285h1M310 285h1M331 285h1M140 286h2M277 286h1M329 286h1M523 286h14M142 287h2M279 287h1M293 287h1M309 287h1M327 287h1M61 288h7M144 288h1M281 288h1M323 288h1M325 288h1M68 289h7M294 289h1M307 289h1M321 289h1M283 290h1M319 290h1M524 290h14M285 291h1M295 291h1M306 291h1M317 291h1M61 292h7M287 292h1M315 292h1M68 293h7M289 293h1M296 293h1M304 293h1M313 293h1M291 294h1M311 294h1M293 295h1M297 295h1M302 295h1M307 295h1M309 295h1M305 296h1M61 297h14M295 297h1M298 297h1M301 297h1M303 297h1M297 298h1M301 298h1M524 298h14M299 299h1M61 300h14M297 300h1M301 300h1M295 301h1M297 301h1M300 301h1M303 301h1M524 301h14M293 302h1M289 303h1M291 303h1M296 303h1M301 303h1M305 303h1M287 304h1M307 304h1M285 305h1M294 305h1M302 305h1M309 305h1M524 305h7M283 306h1M311 306h1M531 306h7M281 307h1M292 307h1M303 307h1M313 307h1M61 308h14M279 308h1M315 308h1M277 309h1M291 309h1M304 309h1M524 309h7M273 310h1M275 310h1M317 310h1M531 310h7M271 311h1M289 311h1M305 311h1M319 311h1M62 312h14M269 312h1M321 312h1M267 313h1M288 313h1M306 313h1M323 313h1M265 314h1M325 314h1M68 315h8M263 315h1M286 315h1M307 315h1M327 315h1M62 316h6M261 316h1M259 317h1M284 317h1M308 317h1M329 317h1M523 317h7M255 318h1M257 318h1M331 318h1M530 318h7M72 319h4M253 319h1M283 319h1M309 319h1M333 319h1M66 320h6M251 320h1M335 320h1M62 321h4M249 321h1M281 321h1M310 321h1M337 321h1M523 321h7M247 322h1M339 322h1M530 322h7M245 323h1M279 323h1M311 323h1M243 324h1M341 324h1M239 325h1M241 325h1M278 325h1M312 325h1M343 325h1M523 325h6M237 326h1M345 326h1M529 326h8M73 327h4M235 327h1M276 327h1M313 327h1M347 327h1M66 328h7M233 328h1M349 328h1M63 329h3M231 329h1M274 329h1M314 329h1M522 329h7M229 330h1M351 330h1M529 330h7M74 331h3M227 331h1M273 331h1M315 331h1M353 331h1M67 332h7M223 332h1M225 332h1M355 332h1M63 333h4M271 333h1M316 333h1M357 333h1M219 334h1M359 334h1M74 335h4M217 335h1M269 335h1M317 335h1M361 335h1M68 336h6M521 336h3M64 337h4M213 337h1M268 337h1M318 337h1M363 337h1M524 337h4M211 338h1M365 338h1M528 338h4M75 339h4M266 339h1M319 339h1M367 339h1M532 339h2M68 340h7M205 340h1M207 340h1M369 340h1M520 340h3M65 341h3M203 341h1M265 341h1M320 341h1M371 341h1M523 341h4M201 342h1M373 342h1M527 342h4M199 343h1M263 343h1M320 343h1M531 343h3M197 344h1M375 344h1M519 344h3M195 345h1M261 345h1M321 345h1M377 345h1M522 345h4M193 346h1M379 346h1M526 346h5M76 347h4M189 347h1M191 347h1M260 347h1M322 347h1M381 347h1M531 347h2M70 348h6M187 348h1M383 348h1M518 348h3M66 349h4M185 349h1M258 349h1M323 349h1M385 349h1M521 349h4M79 350h2M183 350h1M525 350h5M76 351h3M181 351h1M256 351h1M324 351h1M387 351h1M530 351h2M72 352h4M179 352h1M389 352h1M69 353h3M177 353h1M255 353h1M325 353h1M391 353h1M68 354h1M80 354h2M175 354h1M393 354h1M77 355h3M171 355h1M173 355h1M326 355h1M73 356h4M169 356h1M516 356h3M70 357h3M167 357h1M251 357h1M327 357h1M397 357h1M519 357h4M68 358h2M81 358h2M165 358h1M399 358h1M523 358h5M78 359h3M163 359h1M250 359h1M328 359h1M401 359h1M515 359h2M528 359h2M74 360h4M161 360h1M403 360h1M517 360h4M71 361h3M159 361h1M329 361h1M405 361h1M521 361h3M69 362h2M155 362h1M157 362h1M407 362h1M524 362h4M153 363h1M247 363h1M330 363h1M514 363h2M528 363h1M151 364h1M409 364h1M516 364h3M149 365h1M245 365h1M331 365h1M411 365h1M519 365h4M83 366h2M147 366h1M413 366h1M523 366h3M80 367h3M145 367h1M243 367h1M332 367h1M415 367h1M513 367h2M526 367h2M76 368h4M143 368h1M417 368h1M515 368h3M73 369h3M85 369h1M141 369h1M242 369h1M333 369h1M419 369h1M518 369h4M72 370h1M83 370h2M137 370h1M139 370h1M522 370h3M80 371h3M135 371h1M240 371h1M334 371h1M421 371h1M525 371h2M77 372h3M133 372h1M423 372h1M75 373h2M86 373h2M131 373h1M238 373h1M335 373h1M425 373h1M73 374h2M84 374h2M129 374h1M427 374h1M511 374h2M81 375h3M127 375h1M237 375h1M336 375h1M429 375h1M513 375h2M78 376h3M125 376h1M431 376h1M515 376h2M76 377h2M87 377h2M123 377h1M235 377h1M337 377h1M517 377h3M74 378h2M84 378h3M433 378h1M509 378h2M520 378h2M80 379h4M233 379h1M338 379h1M435 379h1M511 379h2M522 379h2M77 380h3M437 380h1M513 380h3M75 381h2M232 381h1M339 381h1M439 381h1M516 381h3M441 382h1M508 382h2M519 382h2M230 383h1M340 383h1M510 383h2M521 383h2M90 384h1M443 384h1M512 384h3M88 385h2M228 385h1M341 385h1M445 385h1M507 385h1M515 385h3M85 386h3M447 386h1M508 386h2M518 386h2M82 387h3M227 387h1M342 387h1M449 387h1M510 387h2M520 387h1M80 388h2M92 388h1M451 388h1M512 388h2M79 389h1M90 389h2M225 389h1M343 389h1M453 389h1M514 389h2M87 390h3M516 390h2M84 391h3M93 391h2M224 391h1M344 391h1M455 391h1M518 391h1M82 392h2M91 392h2M457 392h1M81 393h1M89 393h2M222 393h1M345 393h1M459 393h1M503 393h2M87 394h2M461 394h1M505 394h2M85 395h2M95 395h2M220 395h1M346 395h1M463 395h1M507 395h3M83 396h2M93 396h2M465 396h1M502 396h1M510 396h3M82 397h1M91 397h2M219 397h1M503 397h2M513 397h2M89 398h2M505 398h2M515 398h1M87 399h2M217 399h1M348 399h1M507 399h2M85 400h2M500 400h1M509 400h2M84 401h1M215 401h1M349 401h1M501 401h2M511 401h2M98 402h2M503 402h2M513 402h1M96 403h2M214 403h1M350 403h1M498 403h1M505 403h2M94 404h2M499 404h2M507 404h2M92 405h2M101 405h1M212 405h1M351 405h1M501 405h2M509 405h2M90 406h2M99 406h2M503 406h1M511 406h1M88 407h2M97 407h2M210 407h1M352 407h1M504 407h2M95 408h2M506 408h2M94 409h1M103 409h1M209 409h1M353 409h1M508 409h2M92 410h2M101 410h2M90 411h2M99 411h2M207 411h1M354 411h1M495 411h2M97 412h2M105 412h1M497 412h2M96 413h1M103 413h2M206 413h1M355 413h1M499 413h1M94 414h2M101 414h2M493 414h2M500 414h2M92 415h2M99 415h2M356 415h1M495 415h2M502 415h2M98 416h1M497 416h1M504 416h2M96 417h2M202 417h1M357 417h1M490 417h1M498 417h2M506 417h1M94 418h2M491 418h2M500 418h2M109 419h1M201 419h1M358 419h1M493 419h2M502 419h2M107 420h2M488 420h1M495 420h1M504 420h1M106 421h1M199 421h1M359 421h1M489 421h2M496 421h2M104 422h2M111 422h1M491 422h1M498 422h2M102 423h2M109 423h2M197 423h1M360 423h1M492 423h2M500 423h2M101 424h1M108 424h1M494 424h1M502 424h1M99 425h2M107 425h1M196 425h1M361 425h1M495 425h2M98 426h1M105 426h2M113 426h1M497 426h1M104 427h1M111 427h2M194 427h1M484 427h1M498 427h2M103 428h1M110 428h1M485 428h2M101 429h2M108 429h2M116 429h1M192 429h1M363 429h1M487 429h1M106 430h2M114 430h2M482 430h1M488 430h2M105 431h1M113 431h1M191 431h1M363 431h1M483 431h2M490 431h2M103 432h2M112 432h1M485 432h1M492 432h1M110 433h2M189 433h1M364 433h1M479 433h1M486 433h1M493 433h2M109 434h1M480 434h2M487 434h2M495 434h1M108 435h1M120 435h1M365 435h1M482 435h1M489 435h1M106 436h2M118 436h2M477 436h1M483 436h1M490 436h1M117 437h1M186 437h1M366 437h1M478 437h1M484 437h2M491 437h2M116 438h1M123 438h1M479 438h2M486 438h1M114 439h2M122 439h1M184 439h1M367 439h1M481 439h1M487 439h1M113 440h1M120 440h2M482 440h1M488 440h2M112 441h1M119 441h1M125 441h1M183 441h1M368 441h1M483 441h1M490 441h1M110 442h2M118 442h1M124 442h1M472 442h1M484 442h1M117 443h1M123 443h1M369 443h1M473 443h1M485 443h2M116 444h1M122 444h1M128 444h1M474 444h1M487 444h1M114 445h2M120 445h2M127 445h1M179 445h1M370 445h1M469 445h1M475 445h1M113 446h1M119 446h1M125 446h2M470 446h1M476 446h1M118 447h1M124 447h1M178 447h1M371 447h1M471 447h2M477 447h2M117 448h1M123 448h1M467 448h1M473 448h1M479 448h1M116 449h1M122 449h1M176 449h1M372 449h1M468 449h1M474 449h1M480 449h1M115 450h1M121 450h1M133 450h1M469 450h1M475 450h1M481 450h1M119 451h2M132 451h1M373 451h1M464 451h1M470 451h1M476 451h1M482 451h1M118 452h1M131 452h1M465 452h1M471 452h1M477 452h2M130 453h1M136 453h1M374 453h1M466 453h1M472 453h2M479 453h1M128 454h2M135 454h1M467 454h1M474 454h1M127 455h1M134 455h1M375 455h1M468 455h1M475 455h1M126 456h1M133 456h1M138 456h1M469 456h1M476 456h1M125 457h1M131 457h2M137 457h1M376 457h1M459 457h1M470 457h1M477 457h1M124 458h1M130 458h1M136 458h1M460 458h1M471 458h1M123 459h1M129 459h1M135 459h1M141 459h1M461 459h1M472 459h1M128 460h1M134 460h1M140 460h1M456 460h1M462 460h1M473 460h1M127 461h1M133 461h1M139 461h1M378 461h1M457 461h1M463 461h1M126 462h1M132 462h1M138 462h1M453 462h1M458 462h1M464 462h1M131 463h1M136 463h2M379 463h1M454 463h1M459 463h1M464 463h1M130 464h1M135 464h1M147 464h1M455 464h1M460 464h1M465 464h1M129 465h1M134 465h1M146 465h1M380 465h1M450 465h1M456 465h1M461 465h1M466 465h1M133 466h1M145 466h1M451 466h1M457 466h1M462 466h1M467 466h1M132 467h1M144 467h1M150 467h1M381 467h1M452 467h1M458 467h1M463 467h1M468 467h1M131 468h1M143 468h1M149 468h1M453 468h1M458 468h1M464 468h1M142 469h1M148 469h1M153 469h1M382 469h1M454 469h1M459 469h1M465 469h1M141 470h1M147 470h1M152 470h1M444 470h1M455 470h1M460 470h1M140 471h1M146 471h1M151 471h1M383 471h1M445 471h1M455 471h1M461 471h1M139 472h1M145 472h1M151 472h1M156 472h1M446 472h1M456 472h1M462 472h1M138 473h1M145 473h1M150 473h1M155 473h1M384 473h1M441 473h1M446 473h1M457 473h1M144 474h1M149 474h1M154 474h1M442 474h1M447 474h1M458 474h1M143 475h1M148 475h1M153 475h1M438 475h1M443 475h1M448 475h1M459 475h1M142 476h1M147 476h1M152 476h1M439 476h1M444 476h1M449 476h1M141 477h1M146 477h1M151 477h1M162 477h1M440 477h1M445 477h1M450 477h1M146 478h1M151 478h1M161 478h1M435 478h1M440 478h1M446 478h1M451 478h1M145 479h1M150 479h1M160 479h1M165 479h1M436 479h1M441 479h1M446 479h1M451 479h1M149 480h1M160 480h1M164 480h1M436 480h1M442 480h1M447 480h1M452 480h1M148 481h1M159 481h1M164 481h1M437 481h1M443 481h1M448 481h1M147 482h1M158 482h1M163 482h1M168 482h1M429 482h1M438 482h1M444 482h1M449 482h1M157 483h1M162 483h1M167 483h1M430 483h1M439 483h1M445 483h1M450 483h1M156 484h1M161 484h1M167 484h1M171 484h1M430 484h1M439 484h1M445 484h1M155 485h1M161 485h1M166 485h1M170 485h1M426 485h1M431 485h1M440 485h1M446 485h1M155 486h1M160 486h1M165 486h1M170 486h1M427 486h1M432 486h1M441 486h1M154 487h1M159 487h1M164 487h1M169 487h1M422 487h1M427 487h1M433 487h1M442 487h1M158 488h1M164 488h1M168 488h1M178 488h1M423 488h1M428 488h1M433 488h1M442 488h1M158 489h1M163 489h1M168 489h1M177 489h1M419 489h1M423 489h1M429 489h1M434 489h1M157 490h1M162 490h1M167 490h1M177 490h1M181 490h1M420 490h1M424 490h1M429 490h1M435 490h1M161 491h1M167 491h1M176 491h1M180 491h1M420 491h1M425 491h1M430 491h1M436 491h1M161 492h1M166 492h1M175 492h1M180 492h1M421 492h1M426 492h1M430 492h1M436 492h1M165 493h1M175 493h1M179 493h1M184 493h1M412 493h1M422 493h1M426 493h1M431 493h1M165 494h1M174 494h1M179 494h1M184 494h1M413 494h1M422 494h1M427 494h1M432 494h1M164 495h1M173 495h1M178 495h1M183 495h1M187 495h1M409 495h1M413 495h1M423 495h1M428 495h1M432 495h1M173 496h1M177 496h1M183 496h1M187 496h1M410 496h1M414 496h1M423 496h1M429 496h1M172 497h1M177 497h1M182 497h1M186 497h1M405 497h1M410 497h1M414 497h1M424 497h1M429 497h1M171 498h1M176 498h1M181 498h1M186 498h1M195 498h1M406 498h1M411 498h1M415 498h1M425 498h1M171 499h1M176 499h1M181 499h1M185 499h1M194 499h1M402 499h1M406 499h1M411 499h1M416 499h1M425 499h1M175 500h1M180 500h1M184 500h1M194 500h1M198 500h1M403 500h1M407 500h1M412 500h1M416 500h1M426 500h1M175 501h1M180 501h1M184 501h1M193 501h1M197 501h1M403 501h1M407 501h1M413 501h1M417 501h1M174 502h1M179 502h1M183 502h1M193 502h1M197 502h1M202 502h1M395 502h1M404 502h1M408 502h1M413 502h1M417 502h1M179 503h1M183 503h1M192 503h1M196 503h1M201 503h1M205 503h1M395 503h1M404 503h1M409 503h1M414 503h1M418 503h1M178 504h1M182 504h1M191 504h1M196 504h1M201 504h1M205 504h1M391 504h1M396 504h1M405 504h1M409 504h1M414 504h1M418 504h1M182 505h1M191 505h1M195 505h1M200 505h1M204 505h1M392 505h1M396 505h1M405 505h1M410 505h1M415 505h1M181 506h1M190 506h1M195 506h1M200 506h1M204 506h1M388 506h1M392 506h1M397 506h1M406 506h1M410 506h1M415 506h1M190 507h1M194 507h1M199 507h1M203 507h1M213 507h1M389 507h1M393 507h1M397 507h1M406 507h1M411 507h1M189 508h1M194 508h1M199 508h1M203 508h1M212 508h1M216 508h1M384 508h1M389 508h1M393 508h1M398 508h1M407 508h1M411 508h1M189 509h1M193 509h1M198 509h1M203 509h1M212 509h1M216 509h1M220 509h1M385 509h1M390 509h1M394 509h1M398 509h1M407 509h1M188 510h1M193 510h1M198 510h1M202 510h1M211 510h1M215 510h1M220 510h1M377 510h1M385 510h1M390 510h1M394 510h1M399 510h1M408 510h1M192 511h1M197 511h1M202 511h1M211 511h1M215 511h1M219 511h1M224 511h1M373 511h1M377 511h1M386 511h1M390 511h1M395 511h1M399 511h1M192 512h1M197 512h1M202 512h1M210 512h1M214 512h1M219 512h1M224 512h1M373 512h1M378 512h1M386 512h1M391 512h1M395 512h1M400 512h1M196 513h1M201 513h1M210 513h1M214 513h1M218 513h1M223 513h1M231 513h1M369 513h1M374 513h1M378 513h1M386 513h1M391 513h1M396 513h1M400 513h1M201 514h1M209 514h1M214 514h1M218 514h1M223 514h1M231 514h1M235 514h1M366 514h1M370 514h1M374 514h1M378 514h1M387 514h1M391 514h1M396 514h1M401 514h1M200 515h1M209 515h1M213 515h1M218 515h1M222 515h1M230 515h1M235 515h1M239 515h1M366 515h1M370 515h1M375 515h1M379 515h1M387 515h1M392 515h1M397 515h1M208 516h1M213 516h1M217 516h1M222 516h1M230 516h1M234 516h1M239 516h1M242 516h1M358 516h1M367 516h1M371 516h1M375 516h1M379 516h1M387 516h1M392 516h1M397 516h1M208 517h1M213 517h1M217 517h1M221 517h1M230 517h1M234 517h1M238 517h1M242 517h1M354 517h1M358 517h1M367 517h1M371 517h1M375 517h1M379 517h1M388 517h1M393 517h1M207 518h1M212 518h1M217 518h1M221 518h1M229 518h1M234 518h1M238 518h1M242 518h1M250 518h1M350 518h1M354 518h1M359 518h1M367 518h1M371 518h1M376 518h1M379 518h1M388 518h1M207 519h1M212 519h1M216 519h1M221 519h1M229 519h1M233 519h1M238 519h1M241 519h1M250 519h1M254 519h1M347 519h1M350 519h1M355 519h1M359 519h1M368 519h1M372 519h1M376 519h1M380 519h1M389 519h1M211 520h1M216 520h1M220 520h1M229 520h1M233 520h1M238 520h1M241 520h1M250 520h1M254 520h1M258 520h1M339 520h1M347 520h1M351 520h1M355 520h1M359 520h1M368 520h1M372 520h1M376 520h1M380 520h1M215 521h1M220 521h1M229 521h1M233 521h1M237 521h1M241 521h1M249 521h1M254 521h1M258 521h1M262 521h1M335 521h1M339 521h1M347 521h1M351 521h1M355 521h1M360 521h1M368 521h1M372 521h1M377 521h1M380 521h1M215 522h1M219 522h1M228 522h1M233 522h1M237 522h1M241 522h1M249 522h1M253 522h1M258 522h1M262 522h1M269 522h1M327 522h1M331 522h1M335 522h1M339 522h1M347 522h1M351 522h1M356 522h1M360 522h1M368 522h1M373 522h1M377 522h1M381 522h1M219 523h1M228 523h1M232 523h1M237 523h1M240 523h1M249 523h1M253 523h1M257 523h1M262 523h1M269 523h1M273 523h1M277 523h1M281 523h1M312 523h1M315 523h1M319 523h1M327 523h1M331 523h1M335 523h1M339 523h1M348 523h1M352 523h1M356 523h1M360 523h1M369 523h1M373 523h1M378 523h1M381 523h1M228 524h1M232 524h1M236 524h1M240 524h1M249 524h1M253 524h1M257 524h1M261 524h1M269 524h1M273 524h1M277 524h1M281 524h1M289 524h1M293 524h1M297 524h1M300 524h1M308 524h1M312 524h1M315 524h1M319 524h1M327 524h1M331 524h1M335 524h1M340 524h1M348 524h1M352 524h1M356 524h1M360 524h1M369 524h1M374 524h1M378 524h1M227 525h1M232 525h1M236 525h1M240 525h1M248 525h1M253 525h1M257 525h1M261 525h1M269 525h1M273 525h1M277 525h1M281 525h1M289 525h1M293 525h1M297 525h1M300 525h1M308 525h1M312 525h1M315 525h1M319 525h1M327 525h1M332 525h1M336 525h1M340 525h1M348 525h1M352 525h1M356 525h1M361 525h1M369 525h1M374 525h1M227 526h1M231 526h1M236 526h1M240 526h1M248 526h1M252 526h1M257 526h1M261 526h1M269 526h1M273 526h1M277 526h1M281 526h1M289 526h1M293 526h1M297 526h1M300 526h1M308 526h1M312 526h1M315 526h1M319 526h1M328 526h1M332 526h1M336 526h1M340 526h1M348 526h1M352 526h1M357 526h1M361 526h1M370 526h1M231 527h1M236 527h1M240 527h1M248 527h1M252 527h1M256 527h1M261 527h1M269 527h1M273 527h1M277 527h1M281 527h1M289 527h1M293 527h1M297 527h1M300 527h1M308 527h1M312 527h1M315 527h1M320 527h1M328 527h1M332 527h1M336 527h1M340 527h1M348 527h1M353 527h1M357 527h1M361 527h1M235 528h1M239 528h1M248 528h1M252 528h1M256 528h1M260 528h1M269 528h1M273 528h1M277 528h1M281 528h1M289 528h1M293 528h1M297 528h1M300 528h1M308 528h1M312 528h1M315 528h1M320 528h1M328 528h1M332 528h1M336 528h1M340 528h1M348 528h1M353 528h1M357 528h1M362 528h1M239 529h1M248 529h1M252 529h1M256 529h1M260 529h1M268 529h1M272 529h1M277 529h1M281 529h1M289 529h1M293 529h1M297 529h1M300 529h1M308 529h1M312 529h1M315 529h1M320 529h1M328 529h1M332 529h1M336 529h1M340 529h1M349 529h1M353 529h1M358 529h1M362 529h1M247 530h1M252 530h1M256 530h1M260 530h1M268 530h1M272 530h1M276 530h1M280 530h1M289 530h1M293 530h1M297 530h1M300 530h1M308 530h1M312 530h1M316 530h1M320 530h1M328 530h1M332 530h1M336 530h1M340 530h1M349 530h1M354 530h1M358 530h1M247 531h1M251 531h1M255 531h1M260 531h1M268 531h1M272 531h1M276 531h1M280 531h1M288 531h1M292 531h1M297 531h1M300 531h1M308 531h1M312 531h1M316 531h1M320 531h1M328 531h1M332 531h1M337 531h1M341 531h1M349 531h1M251 532h1M255 532h1M259 532h1M268 532h1M272 532h1M276 532h1M280 532h1M288 532h1M292 532h1M297 532h1M300 532h1M308 532h1M312 532h1M316 532h1M320 532h1M328 532h1M333 532h1M337 532h1M341 532h1M349 532h1M255 533h1M259 533h1M268 533h1M272 533h1M276 533h1M280 533h1M288 533h1M292 533h1M297 533h1M300 533h1M308 533h1M312 533h1M316 533h1M321 533h1M329 533h1M333 533h1M337 533h1M341 533h1M268 534h1M272 534h1M276 534h1M280 534h1M288 534h1M292 534h1M297 534h1M300 534h1M308 534h1M312 534h1M316 534h1M321 534h1M329 534h1M333 534h1M337 534h1M268 535h1M272 535h1M276 535h1M280 535h1M288 535h1M292 535h1M297 535h1M300 535h1M308 535h1M312 535h1M316 535h1M321 535h1M329 535h1M333 535h1M272 536h1M276 536h1M280 536h1M288 536h1M292 536h1M297 536h1M300 536h1M308 536h1M312 536h1M316 536h1M321 536h1M288 537h1M292 537h1M297 537h1M300 537h1M308 537h1"/>
<path stroke="#0000ff" d="M436 73h1M452 73h1M437 74h1M451 74h1M438 75h1M450 75h1M439 76h1M449 76h1M439 77h1M449 77h1M440 78h1M448 78h1M440 79h1M448 79h1M440 80h1M448 80h1M436 81h17M440 82h1M448 82h1M440 83h1M448 83h1M440 84h1M448 84h1M439 85h1M449 85h1M439 86h1M449 86h1M438 87h1M450 87h1M437 88h1M451 88h1M436 89h1M452 89h1M747 138h3M746 139h1M750 139h1M746 140h1M750 140h1M744 141h4M749 141h4M744 143h9M746 176h1M749 176h1M752 176h1M745 177h2M748 177h2M751 177h1M745 178h1M747 178h2M750 178h2M744 179h1M747 179h1M750 179h1M746 181h1M749 181h1M752 181h1M745 182h2M748 182h2M751 182h1M745 183h1M747 183h2M750 183h2M744 184h1M747 184h1M750 184h1M745 216h1M752 216h1M746 217h6M747 218h1M750 218h1M747 219h1M750 219h1M747 220h1M750 220h1M747 221h1M750 221h1M747 222h1M750 222h1M746 223h6M745 224h1M752 224h1M746 246h3M745 247h1M749 247h2M746 248h1M750 248h1M747 249h1M751 249h1M747 250h1M751 250h1M747 251h1M751 251h1M746 252h1M750 252h1M745 253h1M749 253h2M746 254h3M35 276h5M32 277h3M40 277h1M31 278h1M41 278h3M30 279h1M40 279h1M44 279h1M29 280h1M39 280h1M45 280h1M39 281h1M45 281h1M31 282h3M39 282h1M45 282h1M30 283h1M34 283h1M40 283h1M44 283h1M29 284h1M35 284h1M41 284h3M29 285h1M35 285h1M29 286h1M35 286h1M45 286h1M30 287h1M34 287h1M44 287h1M31 288h3M43 288h1M34 289h1M40 289h3M35 290h5M150 308h1M116 309h5M115 310h1M121 310h2M114 311h1M123 311h1M115 312h1M124 312h1M116 313h1M125 313h1M117 314h1M125 314h1M118 315h1M126 315h1M118 316h1M126 316h1M745 316h1M748 316h1M751 316h1M118 317h1M126 317h1M744 317h2M747 317h3M751 317h2M118 318h1M126 318h1M745 318h1M748 318h1M751 318h1M118 319h1M126 319h1M746 319h1M748 319h1M750 319h1M117 320h1M125 320h1M747 320h3M116 321h1M125 321h1M748 321h1M115 322h1M124 322h1M746 322h5M114 323h1M123 323h1M748 323h1M115 324h1M121 324h2M748 324h1M116 325h5M745 326h1M748 326h1M751 326h1M745 327h1M747 327h1M749 327h1M751 327h1M745 328h1M748 328h1M751 328h1M746 329h1M750 329h1M747 330h3M748 331h1M746 332h5M748 333h1M748 334h1M214 422h1M366 433h1M192 439h1M197 439h3M204 439h1M192 440h1M196 440h1M200 440h1M204 440h1M192 441h1M196 441h1M200 441h1M204 441h1M192 442h1M196 442h1M200 442h1M204 442h1M192 443h1M197 443h3M204 443h1M193 444h1M203 444h1M193 445h1M203 445h1M194 446h2M201 446h2M384 446h1M390 446h1M396 446h1M196 447h5M384 447h1M390 447h1M396 447h1M198 448h1M383 448h3M388 448h5M395 448h3M198 449h1M384 449h1M390 449h1M396 449h1M198 450h1M384 450h1M390 450h1M396 450h1M194 451h9M385 451h1M390 451h1M395 451h1M198 452h1M385 452h1M390 452h1M395 452h1M198 453h1M386 453h2M390 453h1M393 453h2M198 454h1M388 454h5M198 455h1M390 455h1M390 456h1M390 457h1M386 458h9M390 459h1M390 460h1M390 461h1M390 462h1M407 526h1M411 526h1M415 526h1M408 527h1M410 527h1M412 527h1M414 527h1M416 527h1M409 528h1M413 528h1M417 528h1M409 529h1M413 529h1M417 529h1M409 530h1M413 530h1M417 530h1M409 531h1M413 531h1M417 531h1M409 532h1M413 532h1M417 532h1M409 533h1M413 533h1M417 533h1M409 534h1M413 534h1M417 534h1M409 535h1M413 535h1M417 535h1M409 536h1M413 536h1M417 536h1M409 537h1M413 537h1M417 537h1M422 537h1M409 538h1M413 538h1M417 538h1M421 538h3M409 539h1M413 539h1M417 539h1M422 539h1M409 540h1M413 540h1M417 540h1M422 540h1M418 541h1M421 541h1M419 542h2"/>
<path stroke="#00ff00" d="M744 126h1M746 126h1M748 126h1M745 127h1M747 127h1M749 127h1M751 127h1M745 128h1M747 128h1M749 128h3M745 129h1M747 129h1M749 129h1M751 129h1M745 130h1M747 130h1M749 130h1M751 130h1M745 131h1M747 131h1M749 131h1M751 131h1M745 132h1M747 132h1M749 132h1M751 132h1M745 133h1M747 133h1M750 133h1M749 134h1M751 134h1M75 146h1M89 146h1M76 147h1M88 147h1M77 148h11M79 149h1M85 149h1M79 150h1M85 150h1M79 151h1M85 151h1M79 152h1M85 152h1M79 153h1M85 153h1M79 154h1M85 154h1M79 155h1M85 155h1M79 156h1M85 156h1M79 157h1M85 157h1M318 157h2M79 158h1M85 158h1M79 159h1M85 159h1M319 159h2M77 160h11M76 161h1M88 161h1M320 161h2M75 162h1M89 162h1M320 163h2M321 165h2M745 166h1M748 166h1M750 166h2M322 167h2M744 167h2M748 167h2M752 167h1M745 168h1M747 168h1M749 168h1M752 168h1M323 169h2M745 169h1M747 169h1M750 169h2M745 170h1M747 170h1M751 170h1M323 171h2M746 171h1M752 171h1M746 172h1M752 172h1M324 173h2M746 173h1M752 173h1M751 174h1M325 175h2M530 175h1M536 175h1M542 175h1M529 176h2M535 176h2M541 176h1M326 177h2M529 177h1M531 177h1M535 177h1M537 177h1M541 177h1M528 178h1M531 178h1M534 178h1M537 178h1M540 178h1M327 179h1M527 179h1M531 179h1M533 179h1M537 179h1M539 179h1M527 180h1M532 180h2M538 180h2M327 181h2M526 181h1M532 181h1M538 181h1M328 183h2M329 185h2M530 185h1M536 185h1M542 185h1M529 186h2M535 186h2M541 186h1M330 187h2M529 187h1M531 187h1M535 187h1M537 187h1M541 187h1M528 188h1M531 188h1M534 188h1M537 188h1M540 188h1M330 189h2M527 189h1M531 189h1M533 189h1M537 189h1M539 189h1M527 190h1M532 190h2M538 190h2M331 191h2M526 191h1M532 191h1M538 191h1M332 193h2M333 195h2M334 197h1M334 199h2M335 201h2M336 203h2M337 205h1M745 206h1M751 206h1M337 207h2M746 207h1M750 207h1M747 208h3M338 209h2M746 209h1M750 209h1M745 210h1M751 210h1M339 211h2M745 211h1M751 211h1M745 212h1M751 212h1M340 213h2M746 213h1M750 213h1M747 214h3M341 215h1M341 217h2M342 219h2M343 221h2M344 223h1M344 225h2M345 227h2M346 229h2M347 231h1M348 233h1M348 235h2M349 237h2M350 239h2M351 241h1M351 243h2M352 245h2M353 247h2M354 249h1M355 251h1M355 253h2M356 255h2M746 256h1M750 256h1M357 257h1M747 257h3M746 258h1M750 258h1M358 259h1M746 259h1M750 259h1M746 260h1M750 260h1M358 261h2M747 261h3M748 262h1M359 263h2M746 263h5M748 264h1M360 265h2M747 266h3M361 267h1M746 267h1M750 267h1M746 268h1M750 268h1M362 269h1M746 269h1M750 269h1M747 270h3M362 271h2M748 271h1M746 272h5M363 273h2M748 273h1M748 274h1M364 275h1M365 277h1M365 279h2M366 281h2M367 283h1M368 285h1M369 287h1M156 288h1M157 289h2M369 289h2M159 290h1M160 291h2M370 291h2M162 292h1M163 293h2M371 293h1M164 294h2M166 295h2M372 295h1M167 296h2M169 297h2M372 297h2M170 298h2M155 299h1M172 299h2M373 299h2M157 300h1M173 300h2M158 301h2M174 301h3M374 301h1M160 302h1M176 302h2M161 303h1M177 303h3M375 303h1M163 304h1M179 304h2M164 305h2M180 305h3M376 305h1M166 306h2M182 306h2M745 306h1M751 306h1M156 307h1M167 307h1M183 307h3M376 307h2M746 307h1M750 307h1M169 308h1M185 308h2M746 308h1M748 308h1M750 308h1M159 309h2M170 309h2M186 309h3M377 309h1M746 309h5M172 310h2M187 310h3M746 310h1M748 310h1M750 310h1M175 311h1M189 311h2M378 311h1M745 311h1M748 311h1M751 311h1M164 312h1M175 312h2M190 312h3M747 312h3M177 313h2M192 313h2M379 313h1M747 313h1M749 313h1M168 314h1M179 314h1M193 314h3M748 314h1M169 315h1M181 315h1M195 315h2M379 315h2M172 316h1M182 316h2M196 316h3M184 317h2M198 317h2M380 317h2M174 318h1M185 318h1M199 318h3M176 319h1M187 319h1M200 319h3M381 319h1M188 320h2M202 320h3M179 321h2M190 321h2M203 321h3M382 321h1M191 322h1M193 322h1M205 322h3M184 323h1M193 323h1M206 323h3M383 323h1M184 324h1M194 324h2M208 324h3M196 325h2M209 325h3M383 325h2M188 326h1M197 326h1M199 326h1M210 326h4M189 327h1M199 327h1M201 327h1M212 327h3M384 327h1M192 328h1M200 328h1M202 328h1M213 328h4M203 329h1M215 329h3M385 329h1M194 330h1M196 330h1M203 330h1M205 330h1M216 330h4M196 331h1M207 331h1M218 331h3M386 331h1M206 332h1M208 332h2M219 332h4M199 333h2M209 333h1M211 333h1M221 333h3M386 333h2M211 334h1M222 334h4M204 335h1M212 335h2M223 335h4M387 335h1M204 336h1M214 336h2M225 336h4M208 337h1M215 337h1M217 337h1M226 337h4M388 337h1M208 338h1M217 338h1M219 338h1M228 338h4M209 339h1M212 339h1M218 339h1M229 339h4M389 339h1M212 340h1M220 340h2M231 340h4M221 341h1M223 341h1M232 341h4M390 341h1M214 342h1M216 342h1M223 342h1M225 342h1M234 342h4M224 343h1M226 343h2M235 343h4M390 343h2M220 344h1M236 344h5M219 345h2M227 345h1M229 345h1M238 345h4M391 345h1M224 346h1M231 346h1M239 346h5M224 347h1M230 347h1M232 347h2M241 347h4M392 347h1M224 348h1M235 348h1M242 348h5M228 349h1M233 349h1M235 349h1M237 349h1M244 349h4M393 349h1M245 350h1M247 350h3M229 351h1M232 351h1M236 351h1M238 351h2M246 351h3M250 351h1M393 351h2M232 352h1M241 352h1M248 352h5M236 353h1M239 353h1M241 353h1M243 353h1M249 353h3M253 353h1M394 353h1M234 354h1M236 354h1M242 354h1M245 354h1M251 354h5M244 355h1M252 355h3M256 355h1M395 355h1M240 356h1M245 356h1M247 356h1M254 356h5M239 357h2M247 357h1M249 357h1M255 357h3M259 357h1M396 357h1M244 358h1M248 358h1M250 358h2M257 358h4M244 359h1M253 359h1M258 359h1M260 359h3M397 359h1M244 360h1M248 360h1M251 360h1M253 360h1M259 360h5M248 361h1M255 361h1M261 361h1M263 361h3M397 361h1M254 362h1M256 362h2M262 362h5M249 363h1M252 363h1M259 363h1M264 363h1M266 363h3M398 363h1M252 364h1M257 364h1M259 364h1M261 364h1M265 364h5M256 365h1M263 365h1M267 365h1M269 365h3M399 365h1M254 366h1M256 366h1M260 366h1M262 366h1M268 366h3M272 366h1M260 367h1M265 367h1M270 367h5M400 367h1M260 368h1M263 368h1M265 368h1M267 368h1M271 368h1M273 368h1M275 368h1M259 369h1M269 369h1M272 369h6M400 369h2M264 370h1M266 370h1M268 370h1M271 370h1M274 370h1M276 370h1M278 370h1M264 371h1M275 371h6M401 371h1M264 372h1M268 372h2M271 372h1M273 372h1M277 372h1M279 372h1M281 372h1M268 373h1M275 373h1M278 373h6M402 373h1M272 374h1M274 374h1M277 374h1M280 374h1M282 374h1M284 374h1M269 375h1M272 375h1M275 375h1M277 375h1M279 375h1M281 375h1M283 375h4M403 375h1M282 376h2M285 376h1M287 376h1M276 377h1M278 377h1M280 377h2M284 377h1M286 377h4M404 377h1M274 378h1M276 378h1M283 378h1M285 378h2M288 378h1M290 378h1M280 379h2M283 379h1M285 379h1M287 379h1M289 379h1M291 379h2M404 379h1M280 380h1M287 380h5M293 380h1M279 381h1M284 381h1M286 381h1M289 381h2M292 381h1M294 381h2M405 381h1M291 382h4M296 382h1M284 383h1M287 383h1M289 383h1M291 383h1M293 383h1M295 383h1M297 383h2M406 383h1M284 384h1M288 384h1M293 384h2M296 384h2M299 384h1M288 385h1M290 385h1M292 385h1M295 385h2M298 385h1M300 385h2M407 385h1M292 386h1M297 386h1M299 386h2M302 386h1M289 387h1M292 387h2M295 387h1M298 387h2M301 387h1M303 387h2M407 387h1M296 388h1M299 388h2M302 388h2M305 388h1M296 389h1M298 389h1M301 389h2M304 389h1M306 389h2M408 389h1M294 390h1M296 390h1M300 390h2M303 390h1M305 390h2M308 390h1M299 391h1M304 391h2M307 391h1M309 391h2M409 391h1M300 392h1M304 392h1M306 392h1M308 392h2M311 392h1M299 393h1M302 393h1M304 393h1M307 393h1M310 393h1M312 393h2M304 394h1M307 394h3M311 394h1M314 394h1M305 395h1M308 395h1M310 395h4M315 395h2M304 396h1M310 396h5M317 396h1M308 397h1M312 397h2M315 397h2M318 397h2M311 398h1M313 398h3M317 398h1M320 398h1M309 399h1M312 399h1M316 399h4M320 400h1M323 400h1M316 401h1M318 401h2M321 401h2M324 401h2M314 402h1M317 402h1M319 402h2M323 402h1M326 402h1M321 403h1M324 403h2M327 403h2M320 404h1M322 404h5M329 404h1M319 405h1M324 405h2M327 405h2M330 405h1M323 406h2M326 406h1M329 406h1M331 406h2M327 407h2M330 407h2M333 407h1M324 408h1M326 408h1M329 408h1M331 408h2M334 408h2M328 409h1M330 409h4M336 409h1M400 409h1M329 410h1M331 410h2M334 410h2M337 410h2M329 411h1M332 411h3M336 411h2M339 411h1M332 412h1M334 412h2M337 412h5M336 413h2M339 413h1M341 413h2M334 414h2M337 414h2M340 414h2M343 414h2M204 415h1M339 415h2M342 415h2M345 415h1M338 416h1M340 416h2M343 416h5M339 417h1M342 417h2M345 417h1M347 417h2M341 418h1M343 418h2M346 418h5M344 419h3M348 419h1M351 419h1M344 420h1M346 420h1M348 420h6M347 421h2M351 421h4M349 422h1M352 422h1M355 422h2M349 423h6M356 423h2M418 423h5M352 424h1M355 424h1M358 424h2M417 424h1M423 424h1M353 425h1M356 425h2M359 425h1M416 425h1M424 425h1M354 426h1M361 426h1M416 426h1M424 426h1M360 427h1M416 427h1M424 427h1M177 428h1M189 428h1M416 428h1M424 428h1M178 429h1M188 429h1M359 429h1M416 429h1M424 429h1M179 430h1M187 430h1M417 430h1M423 430h1M179 431h1M187 431h1M418 431h5M179 432h1M183 432h1M187 432h1M420 432h1M179 433h1M183 433h1M187 433h1M420 433h1M179 434h9M364 434h1M420 434h1M179 435h1M183 435h1M187 435h1M416 435h9M179 436h1M183 436h1M187 436h1M420 436h1M178 437h1M183 437h1M188 437h1M420 437h1M177 438h1M183 438h1M189 438h1M420 438h1M183 439h1M420 439h1M182 440h3M181 441h1M185 441h1M181 442h1M185 442h1M181 443h1M185 443h1M182 444h3M369 455h1M377 455h1M370 456h1M376 456h1M371 457h5M370 458h1M376 458h1M369 459h1M377 459h1M369 460h1M377 460h1M369 461h1M377 461h1M369 462h1M377 462h1M369 463h1M377 463h1M370 464h1M376 464h1M371 465h5M373 466h1M373 467h1M373 468h1M369 469h9M373 470h1M373 471h1M281 557h5M280 558h1M286 558h1M279 559h1M287 559h1M279 560h1M287 560h1M279 561h1M287 561h1M280 562h1M286 562h1M275 563h7M285 563h7M275 567h17"/>
<path stroke="#00ffff" d="M321 159h1M324 161h1M327 163h1M330 165h1M333 167h1M336 170h1M339 172h1M342 174h1M345 176h1M348 178h1M351 180h1M354 182h1M357 184h1M360 186h1M363 188h1M366 190h1M369 192h1M372 195h1M375 197h1M378 199h1M381 201h1M384 203h1M387 205h1M390 207h1M393 209h1M396 211h1M399 213h1M402 215h1M405 217h1M408 220h1M411 222h1M414 224h1M417 226h1M420 228h1M423 230h1M208 410h2M211 410h1M212 411h1M214 411h2M217 411h2M220 411h1M221 412h1M223 412h2M226 412h2M229 412h1M230 413h1M232 413h2M235 413h1M238 413h1M236 414h1M238 414h2M241 414h2M244 414h1M247 414h1M245 415h1M247 415h2M250 415h2M253 415h1M256 415h1M254 416h1M256 416h2M259 416h1M262 416h1M265 416h1M217 417h8M260 417h1M263 417h1M265 417h2M268 417h1M271 417h1M274 417h1M223 418h16M269 418h1M272 418h1M274 418h2M277 418h1M280 418h1M283 418h1M235 419h19M278 419h1M281 419h1M283 419h1M286 419h1M289 419h1M292 419h1M247 420h22M284 420h1M287 420h1M289 420h2M292 420h1M295 420h1M298 420h1M301 420h1M259 421h24M293 421h1M296 421h1M298 421h2M301 421h1M304 421h1M307 421h1M310 421h1M271 422h27M302 422h1M305 422h1M307 422h1M310 422h1M313 422h1M316 422h1M319 422h1M283 423h29M314 423h1M316 423h1M319 423h1M322 423h1M325 423h1M328 423h1M331 423h1M294 424h33M328 424h1M331 424h1M334 424h1M337 424h1M340 424h1M306 425h36M343 425h1M346 425h1M349 425h1M318 426h36M355 426h1M358 426h1M330 427h30M361 427h1M342 428h12M355 428h5M354 429h5"/>
<path stroke="#007f7f" d="M118 272h5M117 273h1M123 273h1M116 274h1M124 274h1M115 275h1M125 275h1M114 276h1M126 276h1M114 277h1M126 277h1M114 278h1M126 278h1M114 279h1M126 279h1M114 280h1M126 280h1M115 281h1M125 281h1M116 282h1M124 282h1M116 283h1M124 283h1M114 284h3M124 284h3M113 285h1M116 285h1M124 285h1M127 285h1M112 286h1M116 286h1M124 286h1M128 286h1M113 287h1M115 287h1M125 287h1M127 287h1M114 288h1M126 288h1M150 288h1M747 336h3M746 337h1M750 337h1M745 338h1M751 338h1M745 339h1M751 339h1M745 340h1M751 340h1M746 341h1M750 341h1M745 342h2M750 342h2M744 343h1M746 343h1M750 343h1M752 343h1M745 344h1M751 344h1"/>
</g>
<text transform="translate(94.5,347) scale(.85,1)" fill="#ff0000" class="hn">1</text>
<text transform="translate(132.5,431) scale(.85,1)" fill="#ffff00" class="hn">2</text>
<text transform="translate(215.5,496) scale(.85,1)" fill="#00ff00" class="hn">3</text>
<text transform="translate(331.5,511) scale(.85,1)" fill="#0000ff" class="hn">4</text>
<text transform="translate(441.5,458) scale(.85,1)" fill="#ff0000" class="hn">5</text>
<text transform="translate(501.5,359) scale(.85,1)" fill="#ffff00" class="hn">6</text>
<text transform="translate(504.5,261) scale(.85,1)" fill="#00ff00" class="hn">7</text>
<text transform="translate(466.5,177) scale(.85,1)" fill="#0000ff" class="hn">8</text>
<text transform="translate(383.5,112) scale(.85,1)" fill="#ff0000" class="hn">9</text>
<text transform="translate(268.1,97) scale(.85,1)" fill="#ffff00" class="hn">10</text>
<text transform="translate(158.1,150) scale(.85,1)" fill="#00ff00" class="hn">11</text>
<text transform="translate(98.1,249) scale(.85,1)" fill="#0000ff" class="hn">12</text>
<text transform="translate(330.5,131) scale(0.480,1)" fill="#ffff00" class="ob" font-size="24.0">MC</text>
<text transform="translate(119.5,308) scale(0.475,1)" fill="#ff0000" class="ob" font-size="24.0">A<tspan font-size="20">sc</tspan></text>
</svg>
<div class="l" style="top:7px"><span style="color:#ffffff">Astrolog 5.40</span></div>
<div class="l" style="top:17px"><span style="color:#bfbfbf">"Anonymous"</span></div>
<div class="l" style="top:27px"><span style="color:#bfbfbf">Wed November 6, 1963</span></div>
<div class="l" style="top:37px"><span style="color:#bfbfbf"> 9:36pm (ST +8:00 GMT)</span></div>
<div class="l" style="top:47px"><span style="color:#bfbfbf">"Taiwan"</span></div>
<div class="l" style="top:57px"><span style="color:#bfbfbf">120°40E 24°10N</span></div>
<div class="l" style="top:67px"><span style="color:#bfbfbf">Placidus houses.</span></div>
<div class="l" style="top:77px"><span style="color:#bfbfbf">Tropical, Geocentric.</span></div>
<div class="l" style="top:87px"><span style="color:#bfbfbf">Julian Day = 2438340.0667</span></div>
<div class="l" style="top:107px"><span style="color:#ff0000"> 1st house: </span><span style="color:#0000ff">18Can41</span></div>
<div class="l" style="top:117px"><span style="color:#ffff00"> 2nd house: </span><span style="color:#ff0000">12Leo32</span></div>
<div class="l" style="top:127px"><span style="color:#00ff00"> 3rd house: </span><span style="color:#ffff00"> 9Vir22</span></div>
<div class="l" style="top:137px"><span style="color:#0000ff"> 4th house: </span><span style="color:#00ff00">10Lib35</span></div>
<div class="l" style="top:147px"><span style="color:#ff0000"> 5th house: </span><span style="color:#0000ff">14Sco41</span></div>
<div class="l" style="top:157px"><span style="color:#ffff00"> 6th house: </span><span style="color:#ff0000">18Sag03</span></div>
<div class="l" style="top:167px"><span style="color:#00ff00"> 7th house: </span><span style="color:#ffff00">18Cap41</span></div>
<div class="l" style="top:177px"><span style="color:#0000ff"> 8th house: </span><span style="color:#00ff00">12Aqu32</span></div>
<div class="l" style="top:187px"><span style="color:#ff0000"> 9th house: </span><span style="color:#0000ff"> 9Pis22</span></div>
<div class="l" style="top:197px"><span style="color:#ffff00">10th house: </span><span style="color:#ff0000">10Ari35</span></div>
<div class="l" style="top:207px"><span style="color:#00ff00">11th house: </span><span style="color:#ffff00">14Tau41</span></div>
<div class="l" style="top:217px"><span style="color:#0000ff">12th house: </span><span style="color:#00ff00">18Gem03</span></div>
<div class="l" style="top:237px"><span style="color:#ff0000"> Sun: </span><span style="color:#0000ff">13Sco25</span><span style="color:#ffffff"> </span><span style="color:#bfbfbf"> - 0°00'</span></div>
<div class="l" style="top:247px"><span style="color:#0000ff">Moon: </span><span style="color:#0000ff">22Can08</span><span style="color:#ffffff"> </span><span style="color:#bfbfbf"> + 0°48'</span></div>
<div class="l" style="top:257px"><span style="color:#00ff00">Merc: </span><span style="color:#0000ff">14Sco21</span><span style="color:#ffffff"> </span><span style="color:#bfbfbf"> + 0°03'</span></div>
<div class="l" style="top:267px"><span style="color:#00ff00">Venu: </span><span style="color:#ff0000"> 1Sag16</span><span style="color:#ffffff"> </span><span style="color:#bfbfbf"> - 0°15'</span></div>
<div class="l" style="top:277px"><span style="color:#ff0000">Mars: </span><span style="color:#ff0000"> 8Sag34</span><span style="color:#ffffff"> </span><span style="color:#bfbfbf"> - 0°42'</span></div>
<div class="l" style="top:287px"><span style="color:#ff0000">Jupi: </span><span style="color:#ff0000">10Ari56</span><span style="color:#ffffff">R</span><span style="color:#bfbfbf"> - 1°34'</span></div>
<div class="l" style="top:297px"><span style="color:#ffff00">Satu: </span><span style="color:#00ff00">16Aqu40</span><span style="color:#ffffff"> </span><span style="color:#bfbfbf"> - 1°13'</span></div>
<div class="l" style="top:307px"><span style="color:#00ff00">Uran: </span><span style="color:#ffff00"> 9Vir21</span><span style="color:#ffffff"> </span><span style="color:#bfbfbf"> + 0°45'</span></div>
<div class="l" style="top:317px"><span style="color:#0000ff">Nept: </span><span style="color:#0000ff">15Sco19</span><span style="color:#ffffff"> </span><span style="color:#bfbfbf"> + 1°43'</span></div>
<div class="l" style="top:327px"><span style="color:#0000ff">Plut: </span><span style="color:#ffff00">13Vir48</span><span style="color:#ffffff"> </span><span style="color:#bfbfbf"> +13°33'</span></div>
<div class="l" style="top:337px"><span style="color:#007f7f">Node: </span><span style="color:#0000ff">14Can18</span><span style="color:#ffffff">R</span><span style="color:#bfbfbf"> + 0°00'</span></div>
<div class="l" style="top:357px"><span style="color:#bfbfbf">Fire: 4, Earth: 2,</span></div>
<div class="l" style="top:367px"><span style="color:#bfbfbf">Air : 1, Water: 6</span></div>
<div class="l" style="top:377px"><span style="color:#bfbfbf">Car: 5, Fix: 4, Mut: 4</span></div>
<div class="l" style="top:387px"><span style="color:#bfbfbf">Yang: 5, Yin: 8</span></div>
<div class="l" style="top:397px"><span style="color:#bfbfbf">M: 3, N: 8, A: 5, D: 6</span></div>
<div class="l" style="top:407px"><span style="color:#bfbfbf">Ang: 4, Suc: 5, Cad: 2</span></div>
<div class="l" style="top:417px"><span style="color:#bfbfbf">Learn: 7, Share: 6</span></div>
</div></div></body></html>
